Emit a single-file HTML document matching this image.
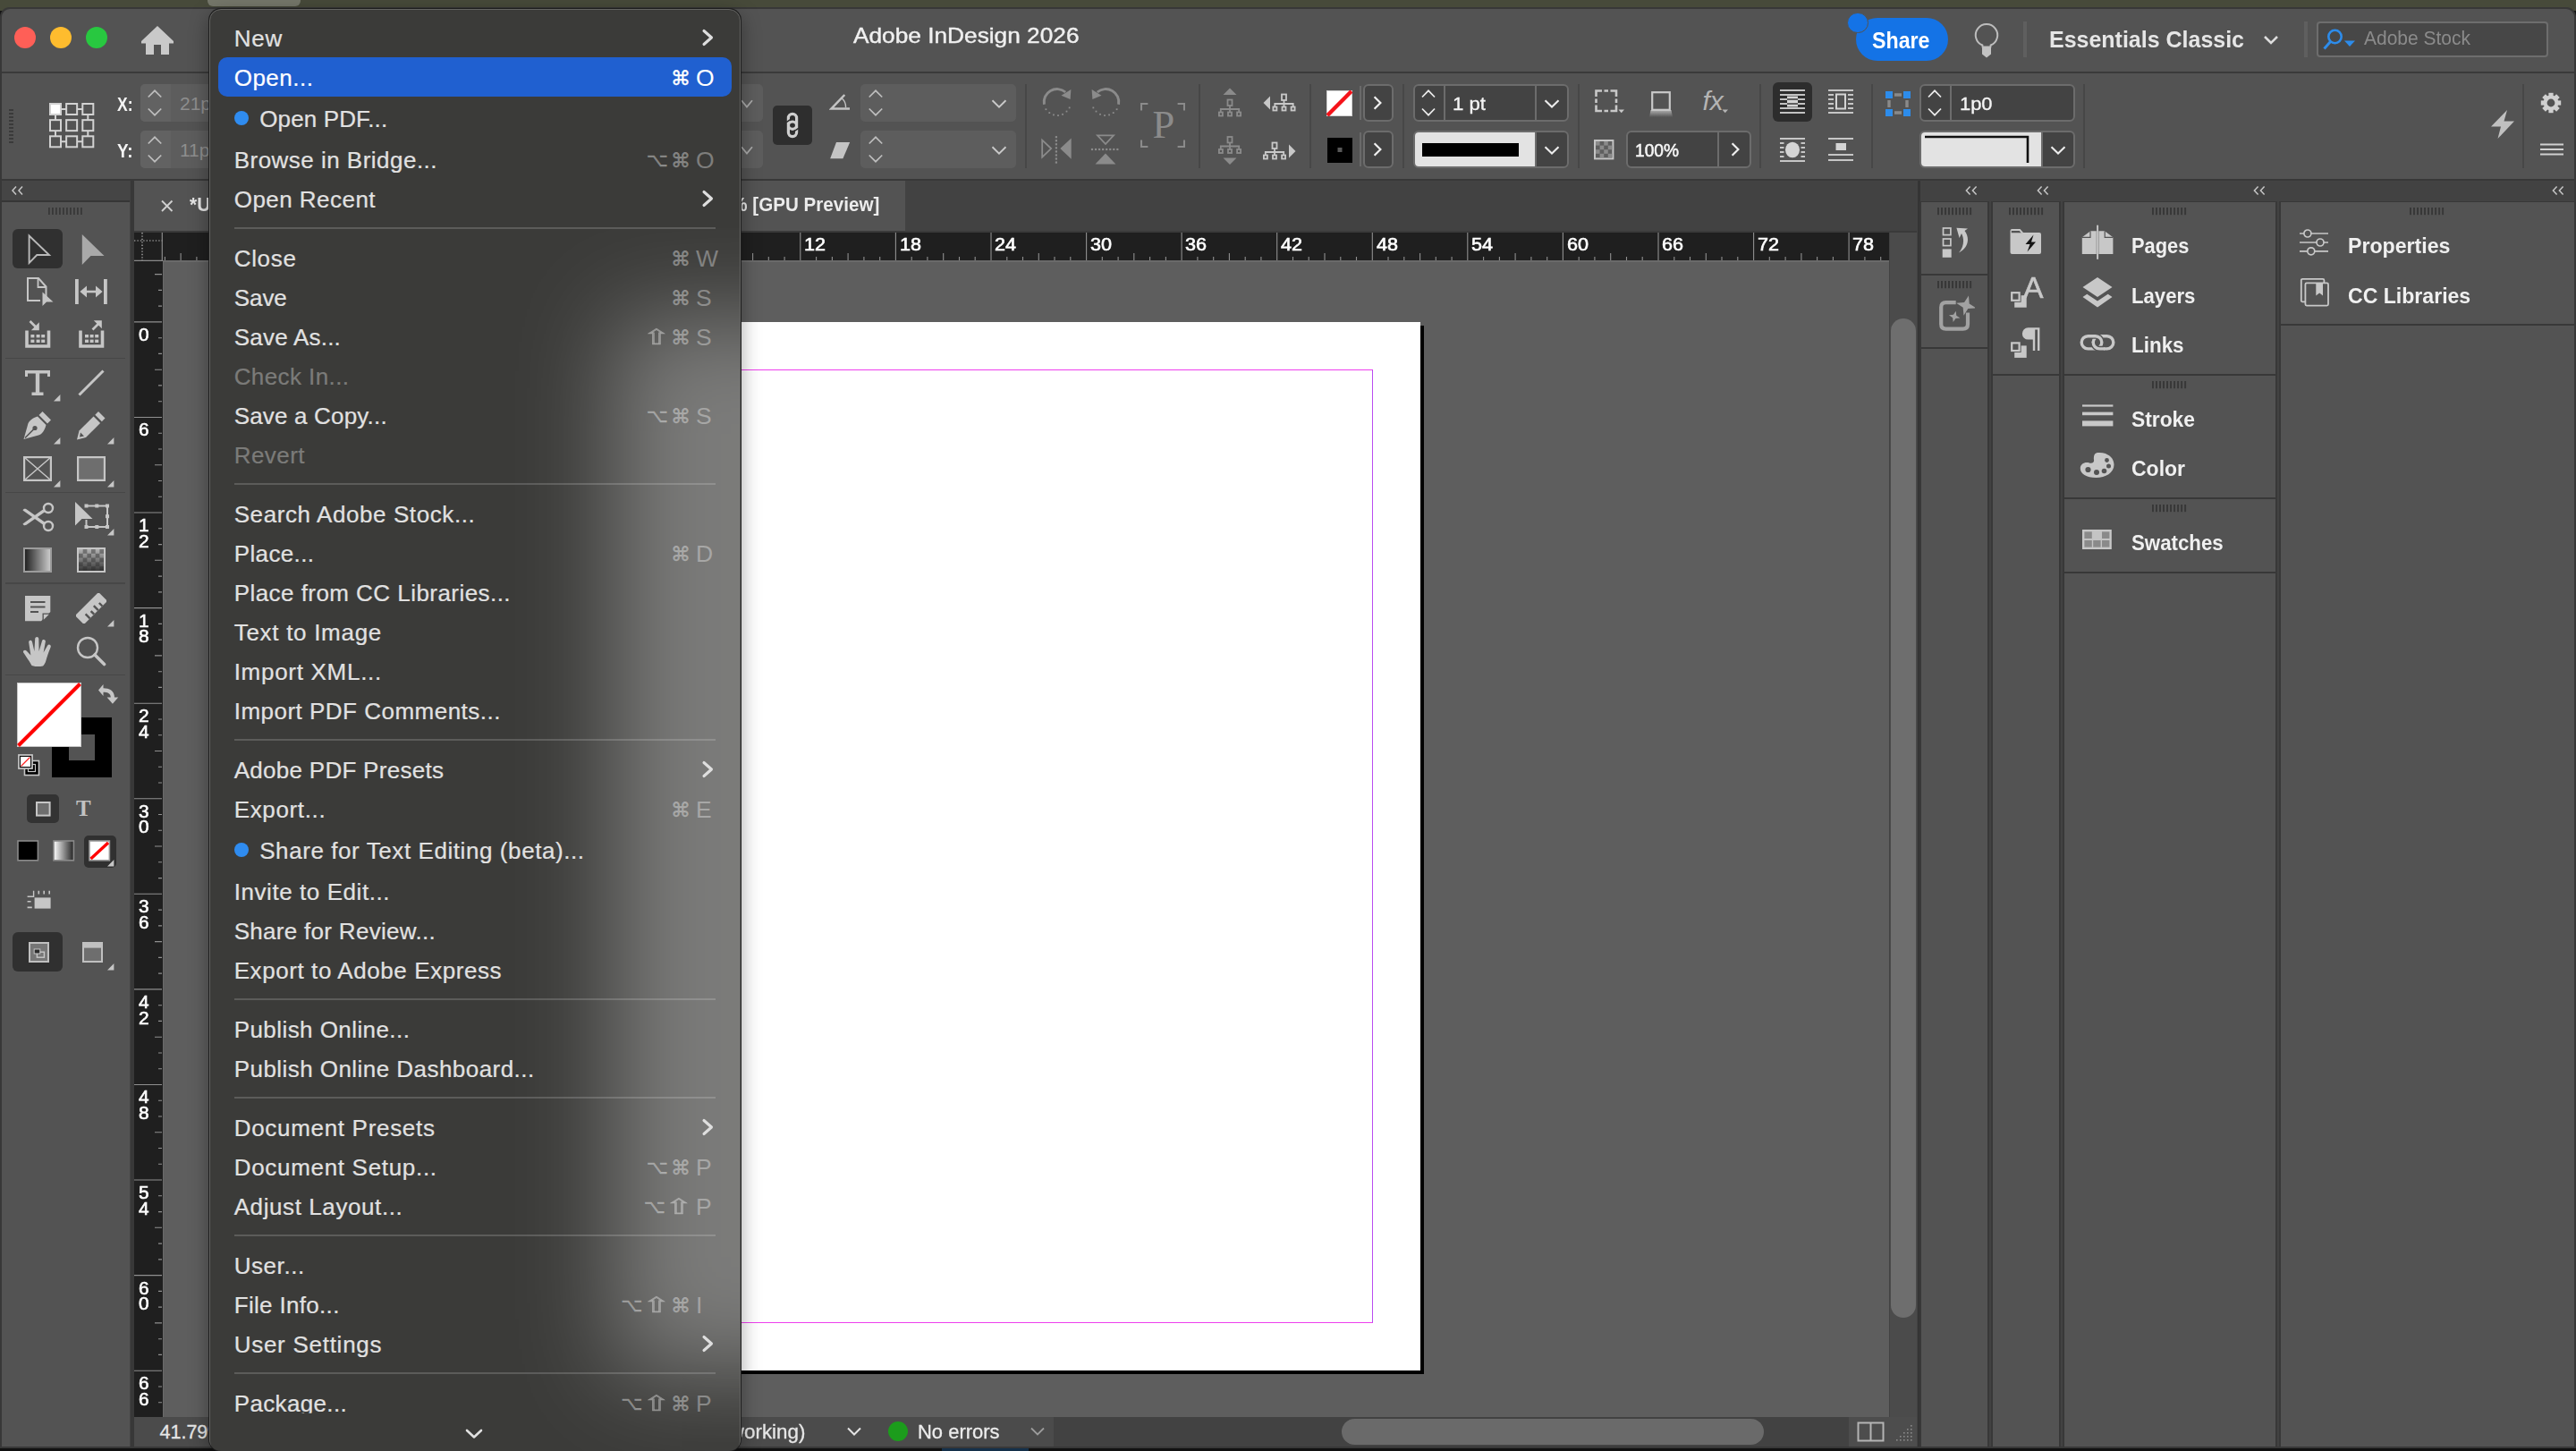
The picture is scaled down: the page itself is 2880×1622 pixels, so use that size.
<!DOCTYPE html>
<html lang="en"><head><meta charset="utf-8"><title>Adobe InDesign 2026</title>
<style>
html,body{margin:0;padding:0;}
body{width:2880px;height:1622px;position:relative;overflow:hidden;background:#151515;font-family:"Liberation Sans",sans-serif;}
div,svg{position:absolute;box-sizing:border-box;}
.t{white-space:pre;}
</style></head><body>
<div style="left:0px;top:0px;width:2880px;height:12px;background:#474a3a;"></div>
<div style="left:232.4px;top:0px;width:103.5px;height:7.4px;background:#75776a;border-radius:0 0 6px 6px;"></div>
<div style="left:0px;top:1610px;width:2880px;height:12px;background:#111111;"></div>
<div style="left:1053px;top:1617px;width:97px;height:5px;background:#14304a;"></div>
<div style="left:2px;top:10px;width:2876px;height:1607px;background:#535353;border-radius:9px 9px 0 0;box-shadow:0 0 0 2px #383838;"></div>
<div style="left:2px;top:80px;width:2876px;height:2px;background:#3a3a3a;"></div>
<div style="left:2px;top:200px;width:2876px;height:2px;background:#383838;"></div>
<div style="left:2px;top:202px;width:2876px;height:1415px;background:#424242;"></div>
<div style="left:15.8px;top:29.5px;width:24.6px;height:24.6px;background:#ff5f57;border-radius:50%;"></div>
<div style="left:55.89999999999999px;top:29.5px;width:24.6px;height:24.6px;background:#febc2e;border-radius:50%;"></div>
<div style="left:95.89999999999999px;top:29.5px;width:24.6px;height:24.6px;background:#28c840;border-radius:50%;"></div>
<svg style="left:156px;top:27px;" width="40" height="36" viewBox="0 0 40 36"><path d="M20 2 L2 19 L2 21.5 L7 21.5 L7 34 L16 34 L16 23 L24 23 L24 34 L33 34 L33 21.5 L38 21.5 L38 19 Z" fill="#c9c9c9"/></svg>
<div class="t" style="left:953.5px;top:24.18px;height:31px;line-height:31px;font-size:24px;color:#f0f0f0;transform:scaleX(1.0938);transform-origin:left center;-webkit-text-stroke:.4px #f0f0f0;">Adobe InDesign 2026</div>
<div style="left:2075px;top:20px;width:103px;height:48px;background:#1473e6;border-radius:24px;"></div>
<div style="left:2065.4px;top:13.7px;width:23.6px;height:23.6px;background:#1473e6;border-radius:50%;border:1.8px solid #535353;"></div>
<div class="t" style="left:2093px;top:27.80px;height:34px;line-height:34px;font-size:26px;color:#ffffff;font-weight:bold;transform:scaleX(0.8926);transform-origin:left center;">Share</div>
<svg style="left:2204px;top:24px;" width="34" height="42" viewBox="0 0 34 42"><path d="M12.4 26.5 A12.2 12.2 0 1 1 21.6 26.5 L21.4 28.6 H12.6 Z" fill="none" stroke="#bdbdbd" stroke-width="2" stroke-linejoin="round"/><path d="M12 28.4 H22 V36.6 L17 40.4 L12 36.6 Z" fill="#c2c2c2"/></svg>
<div style="left:2262px;top:24px;width:3.8px;height:40px;background:#5f5f5f;"></div>
<div class="t" style="left:2291px;top:26.80px;height:34px;line-height:34px;font-size:26px;color:#e6e6e6;font-weight:bold;transform:scaleX(0.9607);transform-origin:left center;">Essentials Classic</div>
<svg style="left:2529px;top:38px;" width="20" height="14" viewBox="0 0 20 14"><path d="M3 3 L10 10 L17 3" fill="none" stroke="#dddddd" stroke-width="2.6"/></svg>
<div style="left:2576px;top:24px;width:3.8px;height:40px;background:#5f5f5f;"></div>
<div style="left:2590px;top:24px;width:259px;height:40px;background:#474747;border:2px solid #6d6d6d;border-radius:4px;box-sizing:border-box;"></div>
<svg style="left:2596px;top:30px;" width="40" height="28" viewBox="0 0 40 28"><circle cx="14.5" cy="11" r="7.2" fill="none" stroke="#2d8ceb" stroke-width="2.6"/><path d="M9.5 16.5 L2.5 24.5" stroke="#2d8ceb" stroke-width="3" fill="none"/><path d="M25 15.5 H37 L31 22 Z" fill="#2d8ceb"/></svg>
<div class="t" style="left:2643px;top:28.26px;height:29px;line-height:29px;font-size:22.5px;color:#8b8b8b;transform:scaleX(0.9327);transform-origin:left center;">Adobe Stock</div>
<svg style="left:10px;top:122px;" width="6" height="40" viewBox="0 0 6 40"><rect x="0" y="0" width="5" height="2" fill="#3a3a3a"/><rect x="0" y="4" width="5" height="2" fill="#3a3a3a"/><rect x="0" y="8" width="5" height="2" fill="#3a3a3a"/><rect x="0" y="12" width="5" height="2" fill="#3a3a3a"/><rect x="0" y="16" width="5" height="2" fill="#3a3a3a"/><rect x="0" y="20" width="5" height="2" fill="#3a3a3a"/><rect x="0" y="24" width="5" height="2" fill="#3a3a3a"/><rect x="0" y="28" width="5" height="2" fill="#3a3a3a"/><rect x="0" y="32" width="5" height="2" fill="#3a3a3a"/><rect x="0" y="36" width="5" height="2" fill="#3a3a3a"/></svg>
<svg style="left:55px;top:115px;" width="51" height="51" viewBox="0 0 51 51"><g fill="none" stroke="#d2d2d2" stroke-width="2"><rect x="1.0" y="1.0" width="12" height="12" fill="#ffffff"/><rect x="1.0" y="19.15" width="12" height="12"/><rect x="1.0" y="37.3" width="12" height="12"/><rect x="19.15" y="1.0" width="12" height="12"/><rect x="19.15" y="19.15" width="12" height="12"/><rect x="19.15" y="37.3" width="12" height="12"/><rect x="37.3" y="1.0" width="12" height="12"/><rect x="37.3" y="19.15" width="12" height="12"/><rect x="37.3" y="37.3" width="12" height="12"/><path d="M13 7 H19.2 M31.2 7 H37.3 M13 43.3 H19.2 M31.2 43.3 H37.3 M7 13 V19.2 M7 31.2 V37.3 M43.3 13 V19.2 M43.3 31.2 V37.3"/></g></svg>
<div class="t" style="left:131px;top:102.45px;height:29px;line-height:29px;font-size:22px;color:#f4f4f4;font-weight:bold;transform:scaleX(0.7954);transform-origin:left center;">X:</div>
<div class="t" style="left:131px;top:154.45px;height:29px;line-height:29px;font-size:22px;color:#f4f4f4;font-weight:bold;transform:scaleX(0.8592);transform-origin:left center;">Y:</div>
<div style="left:156.5px;top:94px;width:696px;height:42px;background:#5d5d5d;border-radius:5px;"></div>
<div style="left:156.5px;top:94px;width:34px;height:42px;background:#626262;border-radius:5px 0 0 5px;"></div>
<svg style="left:163px;top:94px;" width="20" height="42" viewBox="0 0 20 42"><path d="M2.75 14.5 L10 7.3 L17.25 14.5 M2.75 27.5 L10 34.7 L17.25 27.5" fill="none" stroke="#bdbdbd" stroke-width="1.7"/></svg>
<div style="left:156.5px;top:146px;width:696px;height:42px;background:#5d5d5d;border-radius:5px;"></div>
<div style="left:156.5px;top:146px;width:34px;height:42px;background:#626262;border-radius:5px 0 0 5px;"></div>
<svg style="left:163px;top:146px;" width="20" height="42" viewBox="0 0 20 42"><path d="M2.75 14.5 L10 7.3 L17.25 14.5 M2.75 27.5 L10 34.7 L17.25 27.5" fill="none" stroke="#bdbdbd" stroke-width="1.7"/></svg>
<div class="t" style="left:201px;top:102.24px;height:27px;line-height:27px;font-size:21px;color:#8e8e8e;">21p0</div>
<div class="t" style="left:201px;top:154.24px;height:27px;line-height:27px;font-size:21px;color:#8e8e8e;">11p0</div>
<svg style="left:825px;top:109.5px;" width="20" height="12" viewBox="0 0 20 12"><path d="M4.0 2.2 L10 9.6 L16.0 2.2" fill="none" stroke="#aaaaaa" stroke-width="1.8"/></svg>
<svg style="left:825px;top:161.5px;" width="20" height="12" viewBox="0 0 20 12"><path d="M4.0 2.2 L10 9.6 L16.0 2.2" fill="none" stroke="#aaaaaa" stroke-width="1.8"/></svg>
<div style="left:864px;top:118px;width:44px;height:44px;background:#2e2e2e;border-radius:5px;"></div>
<svg style="left:876px;top:124px;" width="20" height="32" viewBox="0 0 20 32"><g fill="none" stroke="#cfcfcf" stroke-width="3.2"><rect x="5.4" y="3.3" width="9.2" height="17" rx="4.6"/><rect x="5.4" y="12" width="9.2" height="16.7" rx="4.6"/></g><path d="M3.2 12.6 L7.6 9.6 M12.4 22.4 L16.8 19.4" stroke="#2e2e2e" stroke-width="1.5"/></svg>
<svg style="left:927px;top:104px;" width="25" height="21" viewBox="0 0 25 21"><path d="M17.3 2 L2.6 17.4 H23" fill="none" stroke="#c4c4c4" stroke-width="2.5"/><path d="M14.3 6 A13 13 0 0 1 18.6 16.2" fill="none" stroke="#c4c4c4" stroke-width="1.4"/></svg>
<svg style="left:927px;top:158px;" width="25" height="20" viewBox="0 0 25 20"><path d="M8 0.9 H23.2 L15.4 19.2 H1.2 Z" fill="#c4c4c4"/></svg>
<div style="left:962px;top:94px;width:174px;height:42px;background:#5d5d5d;border-radius:5px;"></div>
<svg style="left:969px;top:94px;" width="20" height="42" viewBox="0 0 20 42"><path d="M2.75 14.5 L10 7.3 L17.25 14.5 M2.75 27.5 L10 34.7 L17.25 27.5" fill="none" stroke="#bdbdbd" stroke-width="1.7"/></svg>
<svg style="left:1107px;top:109.5px;" width="20" height="12" viewBox="0 0 20 12"><path d="M2.5 2.2 L10 9.6 L17.5 2.2" fill="none" stroke="#c9c9c9" stroke-width="1.9"/></svg>
<div style="left:962px;top:146px;width:174px;height:42px;background:#5d5d5d;border-radius:5px;"></div>
<svg style="left:969px;top:146px;" width="20" height="42" viewBox="0 0 20 42"><path d="M2.75 14.5 L10 7.3 L17.25 14.5 M2.75 27.5 L10 34.7 L17.25 27.5" fill="none" stroke="#bdbdbd" stroke-width="1.7"/></svg>
<svg style="left:1107px;top:161.5px;" width="20" height="12" viewBox="0 0 20 12"><path d="M2.5 2.2 L10 9.6 L17.5 2.2" fill="none" stroke="#c9c9c9" stroke-width="1.9"/></svg>
<div style="left:1145.5px;top:94px;width:2px;height:94px;background:#474747;"></div>
<svg style="left:1165px;top:96px;" width="34" height="36" viewBox="0 0 34 36"><path d="M2.4 20.7 A14.6 14.6 0 0 1 26.2 7" fill="none" stroke="#8b8b8b" stroke-width="2.9"/><path d="M21.5 10.7 L32.4 4.1 L31.6 15 Z" fill="#8b8b8b"/><rect x="3.50" y="25.30" width="1.8" height="1.8" fill="#8b8b8b"/><rect x="7.40" y="29.20" width="1.8" height="1.8" fill="#8b8b8b"/><rect x="12.05" y="31.50" width="1.8" height="1.8" fill="#8b8b8b"/><rect x="17.10" y="32.15" width="1.8" height="1.8" fill="#8b8b8b"/><rect x="22.10" y="30.90" width="1.8" height="1.8" fill="#8b8b8b"/><rect x="26.60" y="27.65" width="1.8" height="1.8" fill="#8b8b8b"/><rect x="29.75" y="23.50" width="1.8" height="1.8" fill="#8b8b8b"/></svg>
<svg style="left:1219.3px;top:96px;" width="34" height="36" viewBox="0 0 34 36"><g transform="translate(34,0) scale(-1,1)"><path d="M2.4 20.7 A14.6 14.6 0 0 1 26.2 7" fill="none" stroke="#8b8b8b" stroke-width="2.9"/><path d="M21.5 10.7 L32.4 4.1 L31.6 15 Z" fill="#8b8b8b"/><rect x="3.50" y="25.30" width="1.8" height="1.8" fill="#8b8b8b"/><rect x="7.40" y="29.20" width="1.8" height="1.8" fill="#8b8b8b"/><rect x="12.05" y="31.50" width="1.8" height="1.8" fill="#8b8b8b"/><rect x="17.10" y="32.15" width="1.8" height="1.8" fill="#8b8b8b"/><rect x="22.10" y="30.90" width="1.8" height="1.8" fill="#8b8b8b"/><rect x="26.60" y="27.65" width="1.8" height="1.8" fill="#8b8b8b"/><rect x="29.75" y="23.50" width="1.8" height="1.8" fill="#8b8b8b"/></g></svg>
<svg style="left:1163px;top:151px;" width="36" height="32" viewBox="0 0 36 32"><path d="M2.2 5.6 L12.2 15.1 L2.2 24.6 Z" fill="none" stroke="#8b8b8b" stroke-width="1.8"/><path d="M34.7 3.4 L22.3 15.1 L34.7 26.7 Z" fill="#8b8b8b"/><rect x="16.80" y="1.10" width="2.2" height="2.2" fill="#8b8b8b"/><rect x="16.80" y="5.15" width="2.2" height="2.2" fill="#8b8b8b"/><rect x="16.80" y="9.20" width="2.2" height="2.2" fill="#8b8b8b"/><rect x="16.80" y="13.25" width="2.2" height="2.2" fill="#8b8b8b"/><rect x="16.80" y="17.30" width="2.2" height="2.2" fill="#8b8b8b"/><rect x="16.80" y="21.35" width="2.2" height="2.2" fill="#8b8b8b"/><rect x="16.80" y="25.40" width="2.2" height="2.2" fill="#8b8b8b"/><rect x="16.80" y="29.45" width="2.2" height="2.2" fill="#8b8b8b"/></svg>
<svg style="left:1219px;top:149px;" width="32" height="36" viewBox="0 0 32 36"><path d="M8 2.4 L26 2.4 L17 12 Z" fill="none" stroke="#8b8b8b" stroke-width="1.8"/><path d="M5.5 34.6 L28.4 34.6 L16.95 22.5 Z" fill="#8b8b8b"/><rect x="0.90" y="16.90" width="2.2" height="2.2" fill="#8b8b8b"/><rect x="4.95" y="16.90" width="2.2" height="2.2" fill="#8b8b8b"/><rect x="9.00" y="16.90" width="2.2" height="2.2" fill="#8b8b8b"/><rect x="13.05" y="16.90" width="2.2" height="2.2" fill="#8b8b8b"/><rect x="17.10" y="16.90" width="2.2" height="2.2" fill="#8b8b8b"/><rect x="21.15" y="16.90" width="2.2" height="2.2" fill="#8b8b8b"/><rect x="25.20" y="16.90" width="2.2" height="2.2" fill="#8b8b8b"/><rect x="29.25" y="16.90" width="2.2" height="2.2" fill="#8b8b8b"/></svg>
<svg style="left:1275px;top:115px;" width="50" height="50" viewBox="0 0 50 50"><path d="M1 8.4 V1 H8.4 M41.6 1 H49 V8.4 M49 41.6 V49 H41.6 M8.4 49 H1 V41.6" fill="none" stroke="#8b8b8b" stroke-width="2.1"/></svg>
<div class="t" style="left:1288.6px;top:109.91px;height:58px;line-height:58px;font-size:44.5px;color:#8b8b8b;font-family:'Liberation Serif',serif;">P</div>
<div style="left:1339.5px;top:94px;width:2px;height:94px;background:#474747;"></div>
<svg style="left:1362px;top:98px;" width="26" height="33" viewBox="0 0 26 33"><path d="M5.5 8 L13 0.5 L20.5 8 Z" fill="#8b8b8b"/><g transform="translate(0,12.5)"><g fill="none" stroke="#8b8b8b" stroke-width="1.8"><rect x="10.5" y="1" width="5" height="6.5"/><path d="M13 7.5 V11.5 M2.8 15 V11.5 H23.2 V15 M13 11.5 V15"/><rect x="0.9" y="15" width="4" height="4"/><rect x="11" y="15" width="4" height="4"/><rect x="21.1" y="15" width="4" height="4"/></g></g></svg>
<svg style="left:1362px;top:152px;" width="26" height="33" viewBox="0 0 26 33"><g><g fill="none" stroke="#8b8b8b" stroke-width="1.8"><rect x="10.5" y="1" width="5" height="6.5"/><path d="M13 7.5 V11.5 M2.8 15 V11.5 H23.2 V15 M13 11.5 V15"/><rect x="0.9" y="15" width="4" height="4"/><rect x="11" y="15" width="4" height="4"/><rect x="21.1" y="15" width="4" height="4"/></g></g><path d="M5.5 24.5 L13 32 L20.5 24.5 Z" fill="#8b8b8b"/></svg>
<svg style="left:1412px;top:104px;" width="37" height="21" viewBox="0 0 37 21"><path d="M8 3.5 L0.5 11 L8 18.5 Z" fill="#c8c8c8"/><g transform="translate(10.5,0.5)"><g fill="none" stroke="#c8c8c8" stroke-width="1.8"><rect x="10.5" y="1" width="5" height="6.5"/><path d="M13 7.5 V11.5 M2.8 15 V11.5 H23.2 V15 M13 11.5 V15"/><rect x="0.9" y="15" width="4" height="4"/><rect x="11" y="15" width="4" height="4"/><rect x="21.1" y="15" width="4" height="4"/></g></g></svg>
<svg style="left:1412px;top:158px;" width="37" height="21" viewBox="0 0 37 21"><g transform="translate(0,0.5)"><g fill="none" stroke="#c8c8c8" stroke-width="1.8"><rect x="10.5" y="1" width="5" height="6.5"/><path d="M13 7.5 V11.5 M2.8 15 V11.5 H23.2 V15 M13 11.5 V15"/><rect x="0.9" y="15" width="4" height="4"/><rect x="11" y="15" width="4" height="4"/><rect x="21.1" y="15" width="4" height="4"/></g></g><path d="M29 3.5 L36.5 11 L29 18.5 Z" fill="#c8c8c8"/></svg>
<div style="left:1463.5px;top:94px;width:2px;height:94px;background:#474747;"></div>
<svg style="left:1482.5px;top:100.5px;" width="29" height="29" viewBox="0 0 29 29"><rect x="0.5" y="0.5" width="28" height="28" fill="#ffffff" stroke="#d0d0d0" stroke-width="1"/><path d="M1 28 L28 1" stroke="#f4131a" stroke-width="4.4"/></svg>
<svg style="left:1484px;top:154px;" width="28" height="28" viewBox="0 0 28 28"><rect x="0" y="0" width="28" height="28" fill="#000000"/><rect x="11.5" y="11" width="5" height="5" fill="#585858"/></svg>
<div style="left:1520px;top:96px;width:1.5px;height:38px;background:#6a6a6a;"></div>
<div style="left:1524px;top:94px;width:34px;height:42px;background:#434343;border:2px solid #6c6c6c;border-radius:6px;"></div>
<svg style="left:1533.5px;top:105px;" width="12" height="20" viewBox="0 0 12 20"><path d="M2.6 3.2 L9.4 10 L2.6 16.8" fill="none" stroke="#f0f0f0" stroke-width="2.2"/></svg>
<div style="left:1520px;top:148px;width:1.5px;height:38px;background:#6a6a6a;"></div>
<div style="left:1524px;top:146px;width:34px;height:42px;background:#434343;border:2px solid #6c6c6c;border-radius:6px;"></div>
<svg style="left:1533.5px;top:157px;" width="12" height="20" viewBox="0 0 12 20"><path d="M2.6 3.2 L9.4 10 L2.6 16.8" fill="none" stroke="#f0f0f0" stroke-width="2.2"/></svg>
<div style="left:1567.7px;top:94px;width:2px;height:94px;background:#474747;"></div>
<div style="left:1580px;top:94px;width:174px;height:42px;background:#434343;border:2px solid #6c6c6c;border-radius:6px;"></div>
<div style="left:1614px;top:96px;width:2px;height:38px;background:#6c6c6c;"></div>
<div style="left:1716px;top:96px;width:2px;height:38px;background:#6c6c6c;"></div>
<svg style="left:1587px;top:94px;" width="20" height="42" viewBox="0 0 20 42"><path d="M3.0 14.5 L10 7.3 L17.0 14.5 M3.0 27.5 L10 34.7 L17.0 27.5" fill="none" stroke="#ececec" stroke-width="1.7"/></svg>
<div class="t" style="left:1623.5px;top:102.24px;height:27px;line-height:27px;font-size:21px;color:#f4f4f4;transform:scaleX(1.0563);transform-origin:left center;-webkit-text-stroke:.35px #f4f4f4;">1 pt</div>
<svg style="left:1725px;top:109.5px;" width="20" height="12" viewBox="0 0 20 12"><path d="M2.5 2.2 L10 9.6 L17.5 2.2" fill="none" stroke="#ececec" stroke-width="2.1"/></svg>
<div style="left:1580px;top:146px;width:174px;height:42px;background:#434343;border:2px solid #6c6c6c;border-radius:6px;"></div>
<div style="left:1582px;top:148px;width:134px;height:38px;background:#e3e3e3;border-radius:4px 0 0 4px;"></div>
<div style="left:1590px;top:160px;width:108px;height:15px;background:#000000;"></div>
<div style="left:1716px;top:148px;width:2px;height:38px;background:#6c6c6c;"></div>
<svg style="left:1725px;top:161.5px;" width="20" height="12" viewBox="0 0 20 12"><path d="M2.5 2.2 L10 9.6 L17.5 2.2" fill="none" stroke="#ececec" stroke-width="2.1"/></svg>
<div style="left:1763.7px;top:94px;width:2px;height:94px;background:#474747;"></div>
<svg style="left:1783px;top:99.5px;" width="34" height="27" viewBox="0 0 34 27"><path d="M1.5 8 V1.5 H8 M17.5 1.5 H24 V8 M24 17.5 V24 H17.5 M8 24 H1.5 V17.5 M10.5 1.5 H15 M10.5 24 H15 M1.5 10.5 V15 M24 10.5 V15" fill="none" stroke="#c8c8c8" stroke-width="2.6"/><path d="M26.5 22.5 H33 L29.7 26.3 Z" fill="#c8c8c8"/></svg>
<svg style="left:1840px;top:100px;" width="34" height="32" viewBox="0 0 34 32"><defs><linearGradient id="dsg" x1="0" y1="0" x2="0" y2="1"><stop offset="0" stop-color="#d0d0d0" stop-opacity=".75"/><stop offset="1" stop-color="#d0d0d0" stop-opacity="0"/></linearGradient></defs><path d="M5.5 23 H28.5 L30 31 H4 Z" fill="url(#dsg)"/><rect x="7.2" y="3.2" width="19.6" height="19.6" fill="none" stroke="#c8c8c8" stroke-width="2.2"/></svg>
<div class="t" style="left:1903.5px;top:92.84px;height:39px;line-height:39px;font-size:30px;color:#b4b4b4;font-style:italic;">fx</div>
<svg style="left:1925px;top:122px;" width="8" height="5" viewBox="0 0 8 5"><path d="M0.5 0.5 H7 L3.7 4.3 Z" fill="#b4b4b4"/></svg>
<svg style="left:1782px;top:156px;" width="23" height="23" viewBox="0 0 23 23"><rect x="1" y="1" width="20.4" height="20.4" fill="#5e5e5e" stroke="#c4c4c4" stroke-width="2"/><rect x="2.0" y="2.0" width="4.6" height="4.6" fill="#8a8a8a"/><rect x="2.0" y="11.2" width="4.6" height="4.6" fill="#8a8a8a"/><rect x="6.6" y="6.6" width="4.6" height="4.6" fill="#8a8a8a"/><rect x="6.6" y="15.799999999999999" width="4.6" height="4.6" fill="#8a8a8a"/><rect x="11.2" y="2.0" width="4.6" height="4.6" fill="#8a8a8a"/><rect x="11.2" y="11.2" width="4.6" height="4.6" fill="#8a8a8a"/><rect x="15.799999999999999" y="6.6" width="4.6" height="4.6" fill="#8a8a8a"/><rect x="15.799999999999999" y="15.799999999999999" width="4.6" height="4.6" fill="#8a8a8a"/></svg>
<div style="left:1818px;top:146px;width:140px;height:42px;background:#434343;border:2px solid #6c6c6c;border-radius:6px;"></div>
<div style="left:1920px;top:148px;width:2px;height:38px;background:#6c6c6c;"></div>
<div class="t" style="left:1828px;top:154.04px;height:27px;line-height:27px;font-size:21px;color:#f6f6f6;transform:scaleX(0.9123);transform-origin:left center;-webkit-text-stroke:.55px #f6f6f6;">100%</div>
<svg style="left:1933.5px;top:157px;" width="12" height="20" viewBox="0 0 12 20"><path d="M2.6 3.2 L9.4 10 L2.6 16.8" fill="none" stroke="#f0f0f0" stroke-width="2.2"/></svg>
<div style="left:1967.3px;top:94px;width:2px;height:94px;background:#474747;"></div>
<div style="left:1982px;top:92px;width:44px;height:44px;background:#2d2d2d;border-radius:6px;"></div>
<svg style="left:1990px;top:100px;" width="28" height="27" viewBox="0 0 28 27"><path d="M0 1 H28" stroke="#d4d4d4" stroke-width="1.8"/><path d="M0 6 H28" stroke="#d4d4d4" stroke-width="1.8"/><path d="M0 11 H28" stroke="#d4d4d4" stroke-width="1.8"/><path d="M0 16 H28" stroke="#d4d4d4" stroke-width="1.8"/><path d="M0 21 H28" stroke="#d4d4d4" stroke-width="1.8"/><path d="M0 26 H28" stroke="#d4d4d4" stroke-width="1.8"/><rect x="8" y="7.5" width="12" height="12" fill="#d4d4d4"/><path d="M8 11 H20" stroke="#2d2d2d" stroke-width="1.4"/><path d="M8 16 H20" stroke="#2d2d2d" stroke-width="1.4"/></svg>
<svg style="left:2044px;top:100px;" width="28" height="27" viewBox="0 0 28 27"><path d="M0 1 H28" stroke="#d4d4d4" stroke-width="1.8"/><path d="M0 26 H28" stroke="#d4d4d4" stroke-width="1.8"/><path d="M0 6 H6" stroke="#d4d4d4" stroke-width="1.8"/><path d="M0 11 H6" stroke="#d4d4d4" stroke-width="1.8"/><path d="M0 16 H6" stroke="#d4d4d4" stroke-width="1.8"/><path d="M0 21 H6" stroke="#d4d4d4" stroke-width="1.8"/><path d="M22 6 H28" stroke="#d4d4d4" stroke-width="1.8"/><path d="M22 11 H28" stroke="#d4d4d4" stroke-width="1.8"/><path d="M22 16 H28" stroke="#d4d4d4" stroke-width="1.8"/><path d="M22 21 H28" stroke="#d4d4d4" stroke-width="1.8"/><rect x="9" y="5.5" width="10" height="16" fill="none" stroke="#d4d4d4" stroke-width="2"/></svg>
<svg style="left:1990px;top:154px;" width="28" height="27" viewBox="0 0 28 27"><path d="M0 1 H28" stroke="#d4d4d4" stroke-width="1.8"/><path d="M0 26 H28" stroke="#d4d4d4" stroke-width="1.8"/><path d="M0 6 H4.5" stroke="#d4d4d4" stroke-width="1.8"/><path d="M0 11 H4.5" stroke="#d4d4d4" stroke-width="1.8"/><path d="M0 16 H4.5" stroke="#d4d4d4" stroke-width="1.8"/><path d="M0 21 H4.5" stroke="#d4d4d4" stroke-width="1.8"/><path d="M23.5 6 H28" stroke="#d4d4d4" stroke-width="1.8"/><path d="M23.5 11 H28" stroke="#d4d4d4" stroke-width="1.8"/><path d="M23.5 16 H28" stroke="#d4d4d4" stroke-width="1.8"/><path d="M23.5 21 H28" stroke="#d4d4d4" stroke-width="1.8"/><ellipse cx="14" cy="13.5" rx="8" ry="8.8" fill="#d4d4d4"/></svg>
<svg style="left:2044px;top:154px;" width="28" height="27" viewBox="0 0 28 27"><path d="M0 1 H28" stroke="#d4d4d4" stroke-width="1.8"/><path d="M0 19 H28" stroke="#d4d4d4" stroke-width="1.8"/><path d="M0 25 H28" stroke="#d4d4d4" stroke-width="1.8"/><rect x="8.5" y="6" width="11.5" height="8" fill="#d4d4d4"/></svg>
<div style="left:2091.8px;top:94px;width:2px;height:94px;background:#474747;"></div>
<svg style="left:2108px;top:102px;" width="28" height="28" viewBox="0 0 28 28"><rect x="0" y="0" width="8" height="8" fill="#2d8ceb"/><rect x="20" y="0" width="8" height="8" fill="#2d8ceb"/><rect x="0" y="20" width="8" height="8" fill="#2d8ceb"/><rect x="20" y="20" width="8" height="8" fill="#2d8ceb"/><path d="M10 4 H18 M10 24 H18 M4 10 V18 M24 10 V18" stroke="#8a8a8a" stroke-width="3.4"/></svg>
<div style="left:2146px;top:94px;width:174px;height:42px;background:#434343;border:2px solid #6c6c6c;border-radius:6px;"></div>
<div style="left:2180px;top:96px;width:2px;height:38px;background:#6c6c6c;"></div>
<svg style="left:2153px;top:94px;" width="20" height="42" viewBox="0 0 20 42"><path d="M3.0 14.5 L10 7.3 L17.0 14.5 M3.0 27.5 L10 34.7 L17.0 27.5" fill="none" stroke="#ececec" stroke-width="1.7"/></svg>
<div class="t" style="left:2191px;top:102.24px;height:27px;line-height:27px;font-size:21px;color:#f4f4f4;transform:scaleX(1.0417);transform-origin:left center;-webkit-text-stroke:.35px #f4f4f4;">1p0</div>
<div style="left:2146px;top:146px;width:174px;height:42px;background:#434343;border:2px solid #6c6c6c;border-radius:6px;"></div>
<div style="left:2148px;top:148px;width:134px;height:38px;background:#e3e3e3;border-radius:4px 0 0 4px;"></div>
<svg style="left:2148px;top:148px;" width="134" height="38" viewBox="0 0 134 38"><path d="M4 5 H119 V34" fill="none" stroke="#111" stroke-width="2.6"/></svg>
<div style="left:2282px;top:148px;width:2px;height:38px;background:#6c6c6c;"></div>
<svg style="left:2290.5px;top:161.5px;" width="20" height="12" viewBox="0 0 20 12"><path d="M2.5 2.2 L10 9.6 L17.5 2.2" fill="none" stroke="#ececec" stroke-width="2.1"/></svg>
<div style="left:2329px;top:94px;width:2px;height:94px;background:#474747;"></div>
<div style="left:2820px;top:94px;width:2px;height:94px;background:#474747;"></div>
<svg style="left:2782px;top:122px;" width="32" height="34" viewBox="0 0 32 34"><path d="M21 1 L3 19.5 H14 L10.5 33 L29 13.5 H17.5 Z" fill="#c0c0c0"/></svg>
<svg style="left:2840px;top:103px;" width="24" height="24" viewBox="0 0 24 24"><g transform="translate(12,12)"><rect x="-2.6" y="-11.2" width="5.2" height="6" fill="#d0d0d0" transform="rotate(0)"/><rect x="-2.6" y="-11.2" width="5.2" height="6" fill="#d0d0d0" transform="rotate(45)"/><rect x="-2.6" y="-11.2" width="5.2" height="6" fill="#d0d0d0" transform="rotate(90)"/><rect x="-2.6" y="-11.2" width="5.2" height="6" fill="#d0d0d0" transform="rotate(135)"/><rect x="-2.6" y="-11.2" width="5.2" height="6" fill="#d0d0d0" transform="rotate(180)"/><rect x="-2.6" y="-11.2" width="5.2" height="6" fill="#d0d0d0" transform="rotate(225)"/><rect x="-2.6" y="-11.2" width="5.2" height="6" fill="#d0d0d0" transform="rotate(270)"/><rect x="-2.6" y="-11.2" width="5.2" height="6" fill="#d0d0d0" transform="rotate(315)"/><circle r="6.4" fill="none" stroke="#d0d0d0" stroke-width="4"/></g></svg>
<svg style="left:2840px;top:160px;" width="26" height="14" viewBox="0 0 26 14"><path d="M0 1.5 H26 M0 7 H26 M0 12.5 H26" stroke="#d0d0d0" stroke-width="1.9"/></svg>
<div style="left:150px;top:202px;width:862px;height:56px;background:#535353;"></div>
<div style="left:146px;top:202px;width:4px;height:1415px;background:#383838;"></div>
<svg style="left:178px;top:222px;" width="18" height="18" viewBox="0 0 18 18"><path d="M3 2.5 L14.5 14 M14.5 2.5 L3 14" stroke="#d0d0d0" stroke-width="1.9" fill="none"/></svg>
<div class="t" style="left:212px;top:214.25px;height:29px;line-height:29px;font-size:22px;color:#e6e6e6;font-weight:bold;transform:scaleX(0.9545);transform-origin:left center;">*Untitled-1</div>
<div class="t" style="right:1897px;top:214.25px;height:29px;line-height:29px;font-size:22px;color:#ececec;font-weight:bold;transform:scaleX(0.9370);transform-origin:right center;">@ 42% [GPU Preview]</div>
<div style="left:150px;top:258px;width:1993px;height:2px;background:#3a3a3a;"></div>
<div style="left:150px;top:260px;width:1993px;height:1324px;background:#5e5e5e;"></div>
<div style="left:2112px;top:260px;width:31px;height:1324px;background:#4b4b4b;"></div>
<div style="left:2112px;top:260px;width:1px;height:1324px;background:#424242;"></div>
<div style="left:2114px;top:356px;width:28px;height:1117px;background:#6e6e6e;border-radius:14px;"></div>
<div style="left:681.7px;top:360px;width:905.8620000000001px;height:1172.192px;background:#ffffff;box-shadow:4px 4px 0 0 #000;"></div>
<div style="left:734.9860000000001px;top:413.3px;width:800.2900000000001px;height:1065.6px;border:1.4px solid #ee3fee;border-right-color:#b94cf0;border-left-color:#b94cf0;box-sizing:border-box;"></div>
<div style="left:150px;top:260px;width:1962px;height:31px;background:#1f1f1f;"></div>
<div style="left:150px;top:291px;width:1962px;height:1.5px;background:#6a6a6a;"></div>
<div style="left:150px;top:260px;width:31.5px;height:1324px;background:#1f1f1f;"></div>
<div style="left:181.5px;top:291px;width:1.2px;height:1293px;background:#6a6a6a;"></div>
<svg style="left:150px;top:260px;" width="32" height="32" viewBox="0 0 32 32"><rect x="0" y="0" width="32" height="32" fill="#1f1f1f"/><path d="M9 0 V32 M0 9 H32" stroke="#bdbdbd" stroke-width="1.2" stroke-dasharray="1.4 2" fill="none"/><path d="M31.3 0 V32 M0 31.3 H32" stroke="#8a8a8a" stroke-width="1.2"/></svg>
<svg style="left:150px;top:260px;" width="1962" height="31" viewBox="0 0 1962 31"><path d="M34.4 27 V31 M52.1 23 V31 M69.9 27 V31 M87.7 27 V31 M105.4 0 V31 M123.2 27 V31 M140.9 27 V31 M158.7 23 V31 M176.5 27 V31 M194.2 27 V31 M212.0 0 V31 M229.7 27 V31 M247.5 27 V31 M265.3 23 V31 M283.0 27 V31 M300.8 27 V31 M318.6 0 V31 M336.3 27 V31 M354.1 27 V31 M371.8 23 V31 M389.6 27 V31 M407.4 27 V31 M425.1 0 V31 M442.9 27 V31 M460.7 27 V31 M478.4 23 V31 M496.2 27 V31 M513.9 27 V31 M531.7 0 V31 M549.5 27 V31 M567.2 27 V31 M585.0 23 V31 M602.7 27 V31 M620.5 27 V31 M638.3 0 V31 M656.0 27 V31 M673.8 27 V31 M691.6 23 V31 M709.3 27 V31 M727.1 27 V31 M744.8 0 V31 M762.6 27 V31 M780.4 27 V31 M798.1 23 V31 M815.9 27 V31 M833.7 27 V31 M851.4 0 V31 M869.2 27 V31 M886.9 27 V31 M904.7 23 V31 M922.5 27 V31 M940.2 27 V31 M958.0 0 V31 M975.8 27 V31 M993.5 27 V31 M1011.3 23 V31 M1029.0 27 V31 M1046.8 27 V31 M1064.6 0 V31 M1082.3 27 V31 M1100.1 27 V31 M1117.8 23 V31 M1135.6 27 V31 M1153.4 27 V31 M1171.1 0 V31 M1188.9 27 V31 M1206.7 27 V31 M1224.4 23 V31 M1242.2 27 V31 M1259.9 27 V31 M1277.7 0 V31 M1295.5 27 V31 M1313.2 27 V31 M1331.0 23 V31 M1348.8 27 V31 M1366.5 27 V31 M1384.3 0 V31 M1402.0 27 V31 M1419.8 27 V31 M1437.6 23 V31 M1455.3 27 V31 M1473.1 27 V31 M1490.8 0 V31 M1508.6 27 V31 M1526.4 27 V31 M1544.1 23 V31 M1561.9 27 V31 M1579.7 27 V31 M1597.4 0 V31 M1615.2 27 V31 M1632.9 27 V31 M1650.7 23 V31 M1668.5 27 V31 M1686.2 27 V31 M1704.0 0 V31 M1721.8 27 V31 M1739.5 27 V31 M1757.3 23 V31 M1775.0 27 V31 M1792.8 27 V31 M1810.6 0 V31 M1828.3 27 V31 M1846.1 27 V31 M1863.9 23 V31 M1881.6 27 V31 M1899.4 27 V31 M1917.1 0 V31 M1934.9 27 V31 M1952.7 27 V31 " stroke="#909090" stroke-width="1.1" fill="none"/></svg>
<div class="t" style="left:259.71200000000005px;top:259.73px;height:26px;line-height:26px;font-size:20px;color:#ffffff;transform:scaleX(1.0788);transform-origin:left center;-webkit-text-stroke:.6px #fff;">24</div>
<div class="t" style="left:366.28400000000005px;top:259.73px;height:26px;line-height:26px;font-size:20px;color:#ffffff;transform:scaleX(1.0788);transform-origin:left center;-webkit-text-stroke:.6px #fff;">18</div>
<div class="t" style="left:472.85600000000005px;top:259.73px;height:26px;line-height:26px;font-size:20px;color:#ffffff;transform:scaleX(1.0788);transform-origin:left center;-webkit-text-stroke:.6px #fff;">12</div>
<div class="t" style="left:579.428px;top:259.73px;height:26px;line-height:26px;font-size:20px;color:#ffffff;transform:scaleX(1.0788);transform-origin:left center;-webkit-text-stroke:.6px #fff;">6</div>
<div class="t" style="left:686.0px;top:259.73px;height:26px;line-height:26px;font-size:20px;color:#ffffff;transform:scaleX(1.0788);transform-origin:left center;-webkit-text-stroke:.6px #fff;">0</div>
<div class="t" style="left:792.572px;top:259.73px;height:26px;line-height:26px;font-size:20px;color:#ffffff;transform:scaleX(1.0788);transform-origin:left center;-webkit-text-stroke:.6px #fff;">6</div>
<div class="t" style="left:899.144px;top:259.73px;height:26px;line-height:26px;font-size:20px;color:#ffffff;transform:scaleX(1.0788);transform-origin:left center;-webkit-text-stroke:.6px #fff;">12</div>
<div class="t" style="left:1005.716px;top:259.73px;height:26px;line-height:26px;font-size:20px;color:#ffffff;transform:scaleX(1.0788);transform-origin:left center;-webkit-text-stroke:.6px #fff;">18</div>
<div class="t" style="left:1112.288px;top:259.73px;height:26px;line-height:26px;font-size:20px;color:#ffffff;transform:scaleX(1.0788);transform-origin:left center;-webkit-text-stroke:.6px #fff;">24</div>
<div class="t" style="left:1218.86px;top:259.73px;height:26px;line-height:26px;font-size:20px;color:#ffffff;transform:scaleX(1.0788);transform-origin:left center;-webkit-text-stroke:.6px #fff;">30</div>
<div class="t" style="left:1325.432px;top:259.73px;height:26px;line-height:26px;font-size:20px;color:#ffffff;transform:scaleX(1.0788);transform-origin:left center;-webkit-text-stroke:.6px #fff;">36</div>
<div class="t" style="left:1432.0040000000001px;top:259.73px;height:26px;line-height:26px;font-size:20px;color:#ffffff;transform:scaleX(1.0788);transform-origin:left center;-webkit-text-stroke:.6px #fff;">42</div>
<div class="t" style="left:1538.576px;top:259.73px;height:26px;line-height:26px;font-size:20px;color:#ffffff;transform:scaleX(1.0788);transform-origin:left center;-webkit-text-stroke:.6px #fff;">48</div>
<div class="t" style="left:1645.148px;top:259.73px;height:26px;line-height:26px;font-size:20px;color:#ffffff;transform:scaleX(1.0788);transform-origin:left center;-webkit-text-stroke:.6px #fff;">54</div>
<div class="t" style="left:1751.72px;top:259.73px;height:26px;line-height:26px;font-size:20px;color:#ffffff;transform:scaleX(1.0788);transform-origin:left center;-webkit-text-stroke:.6px #fff;">60</div>
<div class="t" style="left:1858.292px;top:259.73px;height:26px;line-height:26px;font-size:20px;color:#ffffff;transform:scaleX(1.0788);transform-origin:left center;-webkit-text-stroke:.6px #fff;">66</div>
<div class="t" style="left:1964.864px;top:259.73px;height:26px;line-height:26px;font-size:20px;color:#ffffff;transform:scaleX(1.0788);transform-origin:left center;-webkit-text-stroke:.6px #fff;">72</div>
<div class="t" style="left:2071.4360000000006px;top:259.73px;height:26px;line-height:26px;font-size:20px;color:#ffffff;transform:scaleX(1.0788);transform-origin:left center;-webkit-text-stroke:.6px #fff;">78</div>
<svg style="left:150px;top:260px;" width="32" height="1324" viewBox="0 0 32 1324"><path d="M23 46.6 H31 M27 64.4 H31 M27 82.1 H31 M0 99.9 H31 M27 117.7 H31 M27 135.4 H31 M23 153.2 H31 M27 170.9 H31 M27 188.7 H31 M0 206.5 H31 M27 224.2 H31 M27 242.0 H31 M23 259.8 H31 M27 277.5 H31 M27 295.3 H31 M0 313.0 H31 M27 330.8 H31 M27 348.6 H31 M23 366.3 H31 M27 384.1 H31 M27 401.9 H31 M0 419.6 H31 M27 437.4 H31 M27 455.1 H31 M23 472.9 H31 M27 490.7 H31 M27 508.4 H31 M0 526.2 H31 M27 544.0 H31 M27 561.7 H31 M23 579.5 H31 M27 597.2 H31 M27 615.0 H31 M0 632.8 H31 M27 650.5 H31 M27 668.3 H31 M23 686.0 H31 M27 703.8 H31 M27 721.6 H31 M0 739.3 H31 M27 757.1 H31 M27 774.9 H31 M23 792.6 H31 M27 810.4 H31 M27 828.1 H31 M0 845.9 H31 M27 863.7 H31 M27 881.4 H31 M23 899.2 H31 M27 917.0 H31 M27 934.7 H31 M0 952.5 H31 M27 970.2 H31 M27 988.0 H31 M23 1005.8 H31 M27 1023.5 H31 M27 1041.3 H31 M0 1059.0 H31 M27 1076.8 H31 M27 1094.6 H31 M23 1112.3 H31 M27 1130.1 H31 M27 1147.9 H31 M0 1165.6 H31 M27 1183.4 H31 M27 1201.1 H31 M23 1218.9 H31 M27 1236.7 H31 M27 1254.4 H31 M0 1272.2 H31 M27 1290.0 H31 M27 1307.7 H31 " stroke="#909090" stroke-width="1.1" fill="none"/></svg>
<div class="t" style="left:154.6px;top:360.83px;height:26px;line-height:26px;font-size:20px;color:#ffffff;transform:scaleX(1.0428);transform-origin:left center;-webkit-text-stroke:.6px #fff;">0</div>
<div class="t" style="left:154.6px;top:467.40px;height:26px;line-height:26px;font-size:20px;color:#ffffff;transform:scaleX(1.0428);transform-origin:left center;-webkit-text-stroke:.6px #fff;">6</div>
<div class="t" style="left:154.6px;top:573.97px;height:26px;line-height:26px;font-size:20px;color:#ffffff;transform:scaleX(1.0428);transform-origin:left center;-webkit-text-stroke:.6px #fff;">1</div>
<div class="t" style="left:154.6px;top:591.77px;height:26px;line-height:26px;font-size:20px;color:#ffffff;transform:scaleX(1.0428);transform-origin:left center;-webkit-text-stroke:.6px #fff;">2</div>
<div class="t" style="left:154.6px;top:680.55px;height:26px;line-height:26px;font-size:20px;color:#ffffff;transform:scaleX(1.0428);transform-origin:left center;-webkit-text-stroke:.6px #fff;">1</div>
<div class="t" style="left:154.6px;top:698.35px;height:26px;line-height:26px;font-size:20px;color:#ffffff;transform:scaleX(1.0428);transform-origin:left center;-webkit-text-stroke:.6px #fff;">8</div>
<div class="t" style="left:154.6px;top:787.12px;height:26px;line-height:26px;font-size:20px;color:#ffffff;transform:scaleX(1.0428);transform-origin:left center;-webkit-text-stroke:.6px #fff;">2</div>
<div class="t" style="left:154.6px;top:804.92px;height:26px;line-height:26px;font-size:20px;color:#ffffff;transform:scaleX(1.0428);transform-origin:left center;-webkit-text-stroke:.6px #fff;">4</div>
<div class="t" style="left:154.6px;top:893.69px;height:26px;line-height:26px;font-size:20px;color:#ffffff;transform:scaleX(1.0428);transform-origin:left center;-webkit-text-stroke:.6px #fff;">3</div>
<div class="t" style="left:154.6px;top:911.49px;height:26px;line-height:26px;font-size:20px;color:#ffffff;transform:scaleX(1.0428);transform-origin:left center;-webkit-text-stroke:.6px #fff;">0</div>
<div class="t" style="left:154.6px;top:1000.26px;height:26px;line-height:26px;font-size:20px;color:#ffffff;transform:scaleX(1.0428);transform-origin:left center;-webkit-text-stroke:.6px #fff;">3</div>
<div class="t" style="left:154.6px;top:1018.06px;height:26px;line-height:26px;font-size:20px;color:#ffffff;transform:scaleX(1.0428);transform-origin:left center;-webkit-text-stroke:.6px #fff;">6</div>
<div class="t" style="left:154.6px;top:1106.83px;height:26px;line-height:26px;font-size:20px;color:#ffffff;transform:scaleX(1.0428);transform-origin:left center;-webkit-text-stroke:.6px #fff;">4</div>
<div class="t" style="left:154.6px;top:1124.63px;height:26px;line-height:26px;font-size:20px;color:#ffffff;transform:scaleX(1.0428);transform-origin:left center;-webkit-text-stroke:.6px #fff;">2</div>
<div class="t" style="left:154.6px;top:1213.41px;height:26px;line-height:26px;font-size:20px;color:#ffffff;transform:scaleX(1.0428);transform-origin:left center;-webkit-text-stroke:.6px #fff;">4</div>
<div class="t" style="left:154.6px;top:1231.21px;height:26px;line-height:26px;font-size:20px;color:#ffffff;transform:scaleX(1.0428);transform-origin:left center;-webkit-text-stroke:.6px #fff;">8</div>
<div class="t" style="left:154.6px;top:1319.98px;height:26px;line-height:26px;font-size:20px;color:#ffffff;transform:scaleX(1.0428);transform-origin:left center;-webkit-text-stroke:.6px #fff;">5</div>
<div class="t" style="left:154.6px;top:1337.78px;height:26px;line-height:26px;font-size:20px;color:#ffffff;transform:scaleX(1.0428);transform-origin:left center;-webkit-text-stroke:.6px #fff;">4</div>
<div class="t" style="left:154.6px;top:1426.55px;height:26px;line-height:26px;font-size:20px;color:#ffffff;transform:scaleX(1.0428);transform-origin:left center;-webkit-text-stroke:.6px #fff;">6</div>
<div class="t" style="left:154.6px;top:1444.35px;height:26px;line-height:26px;font-size:20px;color:#ffffff;transform:scaleX(1.0428);transform-origin:left center;-webkit-text-stroke:.6px #fff;">0</div>
<div class="t" style="left:154.6px;top:1533.12px;height:26px;line-height:26px;font-size:20px;color:#ffffff;transform:scaleX(1.0428);transform-origin:left center;-webkit-text-stroke:.6px #fff;">6</div>
<div class="t" style="left:154.6px;top:1550.92px;height:26px;line-height:26px;font-size:20px;color:#ffffff;transform:scaleX(1.0428);transform-origin:left center;-webkit-text-stroke:.6px #fff;">6</div>
<div style="left:150px;top:1584px;width:1993px;height:33px;background:#424242;"></div>
<div style="left:150px;top:1584px;width:1028px;height:33px;background:#4b4b4b;"></div>
<div class="t" style="left:178.5px;top:1587.45px;height:28px;line-height:28px;font-size:21.5px;color:#e6e6e6;-webkit-text-stroke:.3px #e6e6e6;">41.79%</div>
<div class="t" style="right:1979.5px;top:1586.55px;height:28px;line-height:28px;font-size:21.5px;color:#e6e6e6;transform:scaleX(1.0406);transform-origin:right center;-webkit-text-stroke:.3px #e6e6e6;">(working)</div>
<svg style="left:946px;top:1593.5px;" width="18" height="12" viewBox="0 0 18 12"><path d="M2 2.5 L9 9.5 L16 2.5" fill="none" stroke="#e4e4e4" stroke-width="2"/></svg>
<div style="left:993px;top:1589px;width:22px;height:22px;background:#1c9c1c;border-radius:50%;"></div>
<div class="t" style="left:1025.5px;top:1586.85px;height:28px;line-height:28px;font-size:21.5px;color:#ececec;transform:scaleX(1.0212);transform-origin:left center;-webkit-text-stroke:.3px #ececec;">No errors</div>
<svg style="left:1151px;top:1594px;" width="18" height="12" viewBox="0 0 18 12"><path d="M2 2.5 L9 9.5 L16 2.5" fill="none" stroke="#9c9c9c" stroke-width="1.8"/></svg>
<div style="left:1500px;top:1586px;width:472px;height:29px;background:#6a6a6a;border-radius:15px;"></div>
<div style="left:2067px;top:1584px;width:76px;height:33px;background:#4d4d4d;"></div>
<svg style="left:2076px;top:1589px;" width="32" height="24" viewBox="0 0 32 24"><rect x="1.5" y="1.5" width="28" height="20" fill="none" stroke="#b4b4b4" stroke-width="2"/><path d="M15.5 1 V22" stroke="#b4b4b4" stroke-width="2"/></svg>
<svg style="left:2120px;top:1593px;" width="20" height="20" viewBox="0 0 20 20"><rect x="0" y="16" width="1.6" height="1.6" fill="#8a8a8a"/><rect x="4" y="12" width="1.6" height="1.6" fill="#8a8a8a"/><rect x="4" y="16" width="1.6" height="1.6" fill="#8a8a8a"/><rect x="8" y="8" width="1.6" height="1.6" fill="#8a8a8a"/><rect x="8" y="12" width="1.6" height="1.6" fill="#8a8a8a"/><rect x="8" y="16" width="1.6" height="1.6" fill="#8a8a8a"/><rect x="12" y="4" width="1.6" height="1.6" fill="#8a8a8a"/><rect x="12" y="8" width="1.6" height="1.6" fill="#8a8a8a"/><rect x="12" y="12" width="1.6" height="1.6" fill="#8a8a8a"/><rect x="12" y="16" width="1.6" height="1.6" fill="#8a8a8a"/><rect x="16" y="0" width="1.6" height="1.6" fill="#8a8a8a"/><rect x="16" y="4" width="1.6" height="1.6" fill="#8a8a8a"/><rect x="16" y="8" width="1.6" height="1.6" fill="#8a8a8a"/><rect x="16" y="12" width="1.6" height="1.6" fill="#8a8a8a"/><rect x="16" y="16" width="1.6" height="1.6" fill="#8a8a8a"/></svg>
<div style="left:2px;top:202px;width:143px;height:22px;background:#454545;"></div>
<div style="left:2px;top:224px;width:143px;height:2px;background:#363636;"></div>
<div style="left:2px;top:226px;width:143px;height:1391px;background:#535353;"></div>
<svg style="left:12px;top:207px;" width="16" height="12" viewBox="0 0 16 12"><path d="M6 1.5 L2 6 L6 10.5 M13 1.5 L9 6 L13 10.5" fill="none" stroke="#c6c6c6" stroke-width="1.5"/></svg>
<svg style="left:54px;top:232px;" width="40" height="8" viewBox="0 0 40 8"><rect x="0" y="0" width="1.8" height="8" fill="#383838"/><rect x="4" y="0" width="1.8" height="8" fill="#383838"/><rect x="8" y="0" width="1.8" height="8" fill="#383838"/><rect x="12" y="0" width="1.8" height="8" fill="#383838"/><rect x="16" y="0" width="1.8" height="8" fill="#383838"/><rect x="20" y="0" width="1.8" height="8" fill="#383838"/><rect x="24" y="0" width="1.8" height="8" fill="#383838"/><rect x="28" y="0" width="1.8" height="8" fill="#383838"/><rect x="32" y="0" width="1.8" height="8" fill="#383838"/><rect x="36" y="0" width="1.8" height="8" fill="#383838"/></svg>
<div style="left:6px;top:399.7px;width:134px;height:1.6px;background:#474747;"></div>
<div style="left:6px;top:549.9000000000001px;width:134px;height:1.6px;background:#474747;"></div>
<div style="left:6px;top:651.2px;width:134px;height:1.6px;background:#474747;"></div>
<div style="left:6px;top:753.7px;width:134px;height:1.6px;background:#474747;"></div>
<div style="left:14px;top:256px;width:56px;height:44px;background:#303030;border-radius:6px;"></div>
<svg style="left:30px;top:260px;" width="28" height="38" viewBox="0 0 28 38"><path d="M2.6 3.5 V34 L11.3 25 H25 Z" fill="none" stroke="#b9b9b9" stroke-width="1.9" stroke-linejoin="miter"/></svg>
<svg style="left:90px;top:260px;" width="28" height="38" viewBox="0 0 28 38"><path d="M1.8 2 V36 L11.5 26 H26.5 Z" fill="#a9a9a9"/></svg>
<svg style="left:29px;top:309px;" width="32" height="34" viewBox="0 0 32 34"><path d="M22.5 23 V11.5 L14 2 H2 V27 H16" fill="none" stroke="#c6c6c6" stroke-width="2"/><path d="M13.5 2.5 V12 H22.5" fill="none" stroke="#c6c6c6" stroke-width="1.8"/><path d="M18.5 17.5 V33 L23 28.5 H30.5 Z" fill="#c6c6c6"/></svg>
<svg style="left:83px;top:311px;" width="38" height="30" viewBox="0 0 38 30"><rect x="1" y="1" width="3.8" height="28" fill="#c6c6c6"/><rect x="33" y="1" width="3.8" height="28" fill="#c6c6c6"/><path d="M11 15 H27" stroke="#c6c6c6" stroke-width="2.6"/><path d="M14 8.6 L6.4 15 L14 21.4 Z M24 8.6 L31.6 15 L24 21.4 Z" fill="#c6c6c6"/></svg>
<svg style="left:28px;top:357px;" width="30" height="34" viewBox="0 0 30 34"><path d="M2 12.5 V30 H26.5 V12.5" fill="none" stroke="#c6c6c6" stroke-width="3.6"/><rect x="6.4" y="17" width="4" height="3.4" fill="#c6c6c6"/><rect x="12.6" y="17" width="4" height="3.4" fill="#c6c6c6"/><rect x="18.2" y="17" width="4" height="3.4" fill="#c6c6c6"/><rect x="6.4" y="22.6" width="4" height="3.4" fill="#c6c6c6"/><rect x="12.6" y="22.6" width="4" height="3.4" fill="#c6c6c6"/><rect x="18.2" y="22.6" width="4" height="3.4" fill="#c6c6c6"/><path d="M5.5 2 L12.5 9" stroke="#c6c6c6" stroke-width="2.6"/><path d="M15.8 3.2 V12.2 H6.8 Z" fill="#c6c6c6"/></svg>
<svg style="left:88px;top:357px;" width="30" height="34" viewBox="0 0 30 34"><path d="M2 12.5 V30 H26.5 V12.5" fill="none" stroke="#c6c6c6" stroke-width="3.6"/><rect x="7" y="17" width="4" height="3.4" fill="#c6c6c6"/><rect x="12.6" y="17" width="4" height="3.4" fill="#c6c6c6"/><rect x="18.2" y="17" width="4" height="3.4" fill="#c6c6c6"/><rect x="7" y="22.6" width="4" height="3.4" fill="#c6c6c6"/><rect x="12.6" y="22.6" width="4" height="3.4" fill="#c6c6c6"/><rect x="18.2" y="22.6" width="4" height="3.4" fill="#c6c6c6"/><path d="M15.5 11.5 L22.5 4.5" stroke="#c6c6c6" stroke-width="2.6"/><path d="M16.8 1.2 H25.8 V10.2 Z" fill="#c6c6c6"/></svg>
<svg style="left:27px;top:413px;" width="30" height="30" viewBox="0 0 30 30"><path d="M1 1 H29 V8 H26 V4.5 H17.2 V25.5 H21.5 V29 H8.5 V25.5 H12.8 V4.5 H4 V8 H1 Z" fill="#c6c6c6"/></svg>
<svg style="left:60px;top:441px;" width="8" height="8" viewBox="0 0 8 8"><path d="M7.4 0 V7.4 H0 Z" fill="#c6c6c6"/></svg>
<svg style="left:86px;top:412px;" width="32" height="32" viewBox="0 0 32 32"><path d="M2.5 29.5 L29.5 2.5" stroke="#c6c6c6" stroke-width="3"/></svg>
<svg style="left:25px;top:459px;" width="34" height="34" viewBox="0 0 34 34"><path d="M22.5 1 L32 10.5 L28 14.5 L18.5 5 Z" fill="#c6c6c6"/><path d="M17 6.5 L26.5 16 C25 22 22 26.5 18 27.5 L1.5 32 L6 16 C7 11.5 11.5 8 17 6.5 Z M3.5 30 L12 21.5" fill="#c6c6c6"/><path d="M3 30.5 L12.5 21" stroke="#535353" stroke-width="1.6"/><circle cx="14" cy="19.5" r="2.6" fill="#535353"/></svg>
<svg style="left:60px;top:488.5px;" width="8" height="8" viewBox="0 0 8 8"><path d="M7.4 0 V7.4 H0 Z" fill="#c6c6c6"/></svg>
<svg style="left:85px;top:459px;" width="34" height="34" viewBox="0 0 34 34"><path d="M25 1 L32.5 8.5 L28.8 12.2 L21.3 4.7 Z" fill="#c6c6c6"/><path d="M19.6 6.4 L27.1 13.9 L11 30 L1 32.5 L3.5 22.5 Z" fill="#c6c6c6"/><path d="M5 24.5 L4 29.5 L9 28.5 Z" fill="#535353"/></svg>
<svg style="left:120px;top:488.5px;" width="8" height="8" viewBox="0 0 8 8"><path d="M7.4 0 V7.4 H0 Z" fill="#c6c6c6"/></svg>
<svg style="left:26px;top:510px;" width="32" height="28" viewBox="0 0 32 28"><rect x="1.1" y="1.1" width="29.8" height="25.8" fill="none" stroke="#c6c6c6" stroke-width="2.2"/><path d="M1 1 L31 27 M31 1 L1 27" stroke="#c6c6c6" stroke-width="1.5"/></svg>
<svg style="left:60px;top:537px;" width="8" height="8" viewBox="0 0 8 8"><path d="M7.4 0 V7.4 H0 Z" fill="#c6c6c6"/></svg>
<svg style="left:86px;top:510px;" width="32" height="28" viewBox="0 0 32 28"><rect x="1.1" y="1.1" width="29.8" height="25.8" fill="#6e6e6e" stroke="#c6c6c6" stroke-width="2.2"/></svg>
<svg style="left:120px;top:537px;" width="8" height="8" viewBox="0 0 8 8"><path d="M7.4 0 V7.4 H0 Z" fill="#c6c6c6"/></svg>
<svg style="left:24px;top:561px;" width="38" height="34" viewBox="0 0 38 34"><circle cx="30" cy="7" r="5" fill="none" stroke="#c6c6c6" stroke-width="2.4"/><circle cx="30" cy="27" r="5" fill="none" stroke="#c6c6c6" stroke-width="2.4"/><path d="M1.5 9.5 C2 7.5 4 7.5 5.5 8.2 L26.5 23 L24 25.5 Z" fill="#c6c6c6"/><path d="M1.5 24.5 C2 26.5 4 26.5 5.5 25.8 L26.5 11 L24 8.5 Z" fill="#c6c6c6"/></svg>
<svg style="left:83px;top:560px;" width="40" height="33" viewBox="0 0 40 33"><path d="M1 1 V27.5 L8.5 20 H20.5 Z" fill="#c6c6c6"/><path d="M13.5 5.5 H37 V29 H13.5 V21" fill="none" stroke="#c6c6c6" stroke-width="2"/><rect x="11.5" y="3.5" width="4" height="4" fill="#c6c6c6"/><rect x="23.3" y="3.5" width="4" height="4" fill="#c6c6c6"/><rect x="35" y="3.5" width="4" height="4" fill="#c6c6c6"/><rect x="35" y="15.2" width="4" height="4" fill="#c6c6c6"/><rect x="35" y="27" width="4" height="4" fill="#c6c6c6"/><rect x="23.3" y="27" width="4" height="4" fill="#c6c6c6"/><rect x="11.5" y="27" width="4" height="4" fill="#c6c6c6"/></svg>
<svg style="left:120px;top:590.5px;" width="8" height="8" viewBox="0 0 8 8"><path d="M7.4 0 V7.4 H0 Z" fill="#c6c6c6"/></svg>
<svg style="left:26px;top:612px;" width="32" height="28" viewBox="0 0 32 28"><defs><linearGradient id="tg1" x1="0" y1="0" x2="1" y2="0"><stop offset="0" stop-color="#1c1c1c"/><stop offset="1" stop-color="#d0d0d0"/></linearGradient></defs><rect x="1" y="1" width="30" height="26" fill="url(#tg1)" stroke="#9c9c9c" stroke-width="2"/></svg>
<svg style="left:86px;top:612px;" width="32" height="28" viewBox="0 0 32 28"><defs><linearGradient id="tg2" x1="0" y1="0" x2="0" y2="1"><stop offset="0" stop-color="#3a3a3a" stop-opacity="0.05"/><stop offset="1" stop-color="#2a2a2a" stop-opacity="0.95"/></linearGradient></defs><rect x="1" y="1" width="30" height="26" fill="#7d7d7d"/><rect x="2.00" y="2.00" width="4.67" height="4.8" fill="#bdbdbd"/><rect x="2.00" y="11.60" width="4.67" height="4.8" fill="#bdbdbd"/><rect x="2.00" y="21.20" width="4.67" height="4.8" fill="#bdbdbd"/><rect x="6.67" y="6.80" width="4.67" height="4.8" fill="#bdbdbd"/><rect x="6.67" y="16.40" width="4.67" height="4.8" fill="#bdbdbd"/><rect x="11.34" y="2.00" width="4.67" height="4.8" fill="#bdbdbd"/><rect x="11.34" y="11.60" width="4.67" height="4.8" fill="#bdbdbd"/><rect x="11.34" y="21.20" width="4.67" height="4.8" fill="#bdbdbd"/><rect x="16.01" y="6.80" width="4.67" height="4.8" fill="#bdbdbd"/><rect x="16.01" y="16.40" width="4.67" height="4.8" fill="#bdbdbd"/><rect x="20.68" y="2.00" width="4.67" height="4.8" fill="#bdbdbd"/><rect x="20.68" y="11.60" width="4.67" height="4.8" fill="#bdbdbd"/><rect x="20.68" y="21.20" width="4.67" height="4.8" fill="#bdbdbd"/><rect x="25.35" y="6.80" width="4.67" height="4.8" fill="#bdbdbd"/><rect x="25.35" y="16.40" width="4.67" height="4.8" fill="#bdbdbd"/><rect x="1" y="1" width="30" height="26" fill="url(#tg2)" stroke="#c6c6c6" stroke-width="2"/></svg>
<svg style="left:28px;top:666px;" width="29" height="29" viewBox="0 0 29 29"><path d="M0 0 H28.3 V18 L18 28.3 H0 Z" fill="#c6c6c6"/><path d="M19.5 28 V19.5 H28 Z" fill="#535353"/><path d="M20.8 26.8 V20.8 H26.8 Z" fill="#c6c6c6"/><path d="M6 7 H22.5 M6 12.5 H22.5 M6 18 H15" stroke="#535353" stroke-width="2"/></svg>
<svg style="left:85px;top:663px;" width="34" height="34" viewBox="0 0 34 34"><g transform="rotate(-45 17 17)"><rect x="-1.5" y="10" width="37" height="14" rx="1.5" fill="#c6c6c6"/><path d="M8 24 V17 M14.5 24 V19 M21 24 V17 M27.5 24 V19" stroke="#535353" stroke-width="2.4"/></g></svg>
<svg style="left:120px;top:692.6px;" width="8" height="8" viewBox="0 0 8 8"><path d="M7.4 0 V7.4 H0 Z" fill="#c6c6c6"/></svg>
<svg style="left:25px;top:711px;" width="34" height="34" viewBox="0 0 34 34"><path d="M10.5 33 C8.5 29 5.5 25 1.2 18.5 C0.2 16.5 2.8 14.8 4.6 16.6 L9.4 21.6 L7.2 7.2 C6.8 4.4 10.4 3.8 11 6.6 L13.4 17 L14.2 3 C14.4 0.2 18.2 0.2 18.3 3 L18.6 17 L22 5.4 C22.8 2.8 26.4 3.8 25.8 6.6 L23.6 18.4 L28.2 10.6 C29.6 8.4 32.6 10 31.6 12.6 C29 19 27.4 24 26.4 27.4 C25.6 30.2 24.4 32.2 23 33.4 C19 34.6 14 34.4 10.5 33 Z" fill="#c6c6c6"/></svg>
<svg style="left:85px;top:711px;" width="34" height="34" viewBox="0 0 34 34"><circle cx="13" cy="13" r="11" fill="none" stroke="#c6c6c6" stroke-width="2.4"/><path d="M21 21 L31.5 31.5" stroke="#c6c6c6" stroke-width="3.6" stroke-linecap="round"/></svg>
<svg style="left:58px;top:802px;" width="67" height="67" viewBox="0 0 67 67"><path d="M0 0 H67 V67 H0 Z M19 19 V48 H48 V19 Z" fill="#000000" fill-rule="evenodd"/></svg>
<svg style="left:18.5px;top:762.5px;" width="72" height="72" viewBox="0 0 72 72"><rect x="0.5" y="0.5" width="71" height="71" fill="#ffffff" stroke="#c8c8c8" stroke-width="1"/><path d="M1.5 70.5 L70.5 1.5" stroke="#ff0000" stroke-width="4"/></svg>
<svg style="left:109px;top:764px;" width="24" height="24" viewBox="0 0 24 24"><path d="M6.5 1 L1 7.5 L6.5 14 V9.8 C11 9.8 14.8 11 14.8 15.5 H10.6 L16.9 22.8 L23.2 15.5 H19 C19 8 13 5.2 6.5 5.2 Z" fill="#c6c6c6"/></svg>
<svg style="left:20px;top:843px;" width="25" height="25" viewBox="0 0 25 25"><rect x="7.5" y="7.5" width="16" height="16" fill="#000" stroke="#c6c6c6" stroke-width="1.6"/><rect x="11.5" y="11.5" width="8" height="8" fill="#000" stroke="#c6c6c6" stroke-width="1.2"/><rect x="1" y="1" width="15" height="15" fill="#fff" stroke="#c6c6c6" stroke-width="1.8"/><path d="M3.5 13.5 L13.5 3.5" stroke="#ff2020" stroke-width="1.3"/><rect x="2.4" y="2.4" width="12.2" height="12.2" fill="none" stroke="#111" stroke-width="1.2"/></svg>
<div style="left:30px;top:888px;width:36px;height:32px;background:#333333;border-radius:5px;"></div>
<svg style="left:40px;top:895.5px;" width="17" height="17" viewBox="0 0 17 17"><rect x="1" y="1" width="14.6" height="14.6" fill="#6e6e6e" stroke="#c6c6c6" stroke-width="2"/></svg>
<div class="t" style="left:85px;top:888.09px;height:32px;line-height:32px;font-size:25px;color:#c2c2c2;font-weight:bold;font-family:'Liberation Serif',serif;">T</div>
<svg style="left:19px;top:939px;" width="25" height="24" viewBox="0 0 25 24"><rect x="1" y="1" width="22.4" height="21.8" fill="#000" stroke="#8a8a8a" stroke-width="1.6"/></svg>
<svg style="left:59px;top:939px;" width="25" height="24" viewBox="0 0 25 24"><defs><linearGradient id="tg3" x1="0" y1="0" x2="1" y2="0"><stop offset="0" stop-color="#ffffff"/><stop offset="1" stop-color="#222222"/></linearGradient></defs><rect x="1" y="1" width="22.4" height="21.8" fill="url(#tg3)" stroke="#8a8a8a" stroke-width="1.6"/></svg>
<div style="left:94px;top:934px;width:36px;height:36px;background:#303030;border-radius:5px;"></div>
<svg style="left:99px;top:939px;" width="25" height="24" viewBox="0 0 25 24"><rect x="1" y="1" width="22.4" height="21.8" fill="#fff" stroke="#9a9a9a" stroke-width="1.6"/><path d="M2.5 21 L22 3" stroke="#ff0000" stroke-width="3.4"/></svg>
<svg style="left:120px;top:960.5px;" width="8" height="8" viewBox="0 0 8 8"><path d="M7.4 0 V7.4 H0 Z" fill="#c6c6c6"/></svg>
<svg style="left:29.5px;top:994.5px;" width="28" height="22" viewBox="0 0 28 22"><rect x="8.6" y="8.4" width="18" height="12.2" fill="#c6c6c6"/><path d="M7.6 0.8 V7.2 H0.6" fill="none" stroke="#c6c6c6" stroke-width="1.4"/><path d="M13.3 0.8 V4.6 M19.2 0.8 V4.6 M25.2 0.8 V4.6 M0.6 12.7 H4.6 M0.6 19.4 H5.8" stroke="#c6c6c6" stroke-width="1.6"/></svg>
<div style="left:14px;top:1042px;width:56px;height:44px;background:#303030;border-radius:6px;"></div>
<svg style="left:31.5px;top:1052.5px;" width="23" height="23" viewBox="0 0 23 23"><rect x="1" y="1" width="21" height="21" fill="#767676" stroke="#c0c0c0" stroke-width="2"/><rect x="6.2" y="8" width="6.6" height="5" fill="#2c2c2c"/><rect x="9.4" y="11.2" width="8" height="6" fill="none" stroke="#c6c6c6" stroke-width="1.4"/><rect x="6.2" y="8" width="6.6" height="5" fill="#2c2c2c" stroke="#c6c6c6" stroke-width="1"/></svg>
<svg style="left:91.5px;top:1052.5px;" width="23" height="23" viewBox="0 0 23 23"><rect x="1" y="1" width="21" height="21" fill="#6e6e6e" stroke="#c0c0c0" stroke-width="2"/><rect x="1" y="1" width="21" height="5.6" fill="#c0c0c0"/></svg>
<svg style="left:120px;top:1077px;" width="8" height="8" viewBox="0 0 8 8"><path d="M7.4 0 V7.4 H0 Z" fill="#c6c6c6"/></svg>
<div style="left:2143px;top:202px;width:735px;height:1415px;background:#424242;"></div>
<div style="left:2143.5px;top:202px;width:3.5px;height:1415px;background:#343434;"></div>
<div style="left:2146px;top:224.5px;width:78px;height:1392.5px;background:#383838;"></div>
<div style="left:2226px;top:224.5px;width:78px;height:1392.5px;background:#383838;"></div>
<div style="left:2306px;top:224.5px;width:240px;height:1392.5px;background:#383838;"></div>
<div style="left:2548px;top:224.5px;width:332px;height:1392.5px;background:#383838;"></div>
<div style="left:2148px;top:226px;width:74px;height:79.7px;background:#535353;"></div>
<div style="left:2148px;top:308px;width:74px;height:79.8px;background:#535353;"></div>
<div style="left:2148px;top:390px;width:74px;height:1227px;background:#535353;"></div>
<div style="left:2228px;top:226px;width:74px;height:191.7px;background:#535353;"></div>
<div style="left:2228px;top:420px;width:74px;height:1197px;background:#535353;"></div>
<div style="left:2308px;top:226px;width:236px;height:191.6px;background:#535353;"></div>
<div style="left:2308px;top:420.4px;width:236px;height:135.3px;background:#535353;"></div>
<div style="left:2308px;top:558.2px;width:236px;height:80.6px;background:#535353;"></div>
<div style="left:2308px;top:641px;width:236px;height:976px;background:#535353;"></div>
<div style="left:2550px;top:226px;width:328px;height:135.7px;background:#535353;"></div>
<div style="left:2550px;top:364px;width:328px;height:1253px;background:#535353;"></div>
<svg style="left:2196.5px;top:207.3px;" width="16" height="12" viewBox="0 0 16 12"><path d="M5.6 1.6 L1.4 6 L5.6 10.4 M12.6 1.6 L8.4 6 L12.6 10.4" fill="none" stroke="#c6c6c6" stroke-width="1.5"/></svg>
<svg style="left:2276.5px;top:207.3px;" width="16" height="12" viewBox="0 0 16 12"><path d="M5.6 1.6 L1.4 6 L5.6 10.4 M12.6 1.6 L8.4 6 L12.6 10.4" fill="none" stroke="#c6c6c6" stroke-width="1.5"/></svg>
<svg style="left:2518.5px;top:207.3px;" width="16" height="12" viewBox="0 0 16 12"><path d="M5.6 1.6 L1.4 6 L5.6 10.4 M12.6 1.6 L8.4 6 L12.6 10.4" fill="none" stroke="#c6c6c6" stroke-width="1.5"/></svg>
<svg style="left:2852.5px;top:207.3px;" width="16" height="12" viewBox="0 0 16 12"><path d="M5.6 1.6 L1.4 6 L5.6 10.4 M12.6 1.6 L8.4 6 L12.6 10.4" fill="none" stroke="#c6c6c6" stroke-width="1.5"/></svg>
<svg style="left:2166px;top:232px;" width="40" height="9" viewBox="0 0 40 9"><rect x="0.00" y="0" width="1.9" height="8.2" fill="#373737"/><rect x="4.02" y="0" width="1.9" height="8.2" fill="#373737"/><rect x="8.04" y="0" width="1.9" height="8.2" fill="#373737"/><rect x="12.06" y="0" width="1.9" height="8.2" fill="#373737"/><rect x="16.08" y="0" width="1.9" height="8.2" fill="#373737"/><rect x="20.10" y="0" width="1.9" height="8.2" fill="#373737"/><rect x="24.12" y="0" width="1.9" height="8.2" fill="#373737"/><rect x="28.14" y="0" width="1.9" height="8.2" fill="#373737"/><rect x="32.16" y="0" width="1.9" height="8.2" fill="#373737"/><rect x="36.18" y="0" width="1.9" height="8.2" fill="#373737"/></svg>
<svg style="left:2166px;top:314px;" width="40" height="9" viewBox="0 0 40 9"><rect x="0.00" y="0" width="1.9" height="8.2" fill="#373737"/><rect x="4.02" y="0" width="1.9" height="8.2" fill="#373737"/><rect x="8.04" y="0" width="1.9" height="8.2" fill="#373737"/><rect x="12.06" y="0" width="1.9" height="8.2" fill="#373737"/><rect x="16.08" y="0" width="1.9" height="8.2" fill="#373737"/><rect x="20.10" y="0" width="1.9" height="8.2" fill="#373737"/><rect x="24.12" y="0" width="1.9" height="8.2" fill="#373737"/><rect x="28.14" y="0" width="1.9" height="8.2" fill="#373737"/><rect x="32.16" y="0" width="1.9" height="8.2" fill="#373737"/><rect x="36.18" y="0" width="1.9" height="8.2" fill="#373737"/></svg>
<svg style="left:2246px;top:232px;" width="40" height="9" viewBox="0 0 40 9"><rect x="0.00" y="0" width="1.9" height="8.2" fill="#373737"/><rect x="4.02" y="0" width="1.9" height="8.2" fill="#373737"/><rect x="8.04" y="0" width="1.9" height="8.2" fill="#373737"/><rect x="12.06" y="0" width="1.9" height="8.2" fill="#373737"/><rect x="16.08" y="0" width="1.9" height="8.2" fill="#373737"/><rect x="20.10" y="0" width="1.9" height="8.2" fill="#373737"/><rect x="24.12" y="0" width="1.9" height="8.2" fill="#373737"/><rect x="28.14" y="0" width="1.9" height="8.2" fill="#373737"/><rect x="32.16" y="0" width="1.9" height="8.2" fill="#373737"/><rect x="36.18" y="0" width="1.9" height="8.2" fill="#373737"/></svg>
<svg style="left:2406px;top:232px;" width="40" height="9" viewBox="0 0 40 9"><rect x="0.00" y="0" width="1.9" height="8.2" fill="#373737"/><rect x="4.02" y="0" width="1.9" height="8.2" fill="#373737"/><rect x="8.04" y="0" width="1.9" height="8.2" fill="#373737"/><rect x="12.06" y="0" width="1.9" height="8.2" fill="#373737"/><rect x="16.08" y="0" width="1.9" height="8.2" fill="#373737"/><rect x="20.10" y="0" width="1.9" height="8.2" fill="#373737"/><rect x="24.12" y="0" width="1.9" height="8.2" fill="#373737"/><rect x="28.14" y="0" width="1.9" height="8.2" fill="#373737"/><rect x="32.16" y="0" width="1.9" height="8.2" fill="#373737"/><rect x="36.18" y="0" width="1.9" height="8.2" fill="#373737"/></svg>
<svg style="left:2406px;top:426px;" width="40" height="9" viewBox="0 0 40 9"><rect x="0.00" y="0" width="1.9" height="8.2" fill="#373737"/><rect x="4.02" y="0" width="1.9" height="8.2" fill="#373737"/><rect x="8.04" y="0" width="1.9" height="8.2" fill="#373737"/><rect x="12.06" y="0" width="1.9" height="8.2" fill="#373737"/><rect x="16.08" y="0" width="1.9" height="8.2" fill="#373737"/><rect x="20.10" y="0" width="1.9" height="8.2" fill="#373737"/><rect x="24.12" y="0" width="1.9" height="8.2" fill="#373737"/><rect x="28.14" y="0" width="1.9" height="8.2" fill="#373737"/><rect x="32.16" y="0" width="1.9" height="8.2" fill="#373737"/><rect x="36.18" y="0" width="1.9" height="8.2" fill="#373737"/></svg>
<svg style="left:2406px;top:564px;" width="40" height="9" viewBox="0 0 40 9"><rect x="0.00" y="0" width="1.9" height="8.2" fill="#373737"/><rect x="4.02" y="0" width="1.9" height="8.2" fill="#373737"/><rect x="8.04" y="0" width="1.9" height="8.2" fill="#373737"/><rect x="12.06" y="0" width="1.9" height="8.2" fill="#373737"/><rect x="16.08" y="0" width="1.9" height="8.2" fill="#373737"/><rect x="20.10" y="0" width="1.9" height="8.2" fill="#373737"/><rect x="24.12" y="0" width="1.9" height="8.2" fill="#373737"/><rect x="28.14" y="0" width="1.9" height="8.2" fill="#373737"/><rect x="32.16" y="0" width="1.9" height="8.2" fill="#373737"/><rect x="36.18" y="0" width="1.9" height="8.2" fill="#373737"/></svg>
<svg style="left:2694px;top:232px;" width="40" height="9" viewBox="0 0 40 9"><rect x="0.00" y="0" width="1.9" height="8.2" fill="#373737"/><rect x="4.02" y="0" width="1.9" height="8.2" fill="#373737"/><rect x="8.04" y="0" width="1.9" height="8.2" fill="#373737"/><rect x="12.06" y="0" width="1.9" height="8.2" fill="#373737"/><rect x="16.08" y="0" width="1.9" height="8.2" fill="#373737"/><rect x="20.10" y="0" width="1.9" height="8.2" fill="#373737"/><rect x="24.12" y="0" width="1.9" height="8.2" fill="#373737"/><rect x="28.14" y="0" width="1.9" height="8.2" fill="#373737"/><rect x="32.16" y="0" width="1.9" height="8.2" fill="#373737"/><rect x="36.18" y="0" width="1.9" height="8.2" fill="#373737"/></svg>
<div class="t" style="left:2383px;top:259.76px;height:30px;line-height:30px;font-size:23px;color:#f0f0f0;font-weight:bold;transform:scaleX(0.9503);transform-origin:left center;">Pages</div>
<div class="t" style="left:2383px;top:315.66px;height:30px;line-height:30px;font-size:23px;color:#f0f0f0;font-weight:bold;transform:scaleX(0.9627);transform-origin:left center;">Layers</div>
<div class="t" style="left:2383px;top:371.46px;height:30px;line-height:30px;font-size:23px;color:#f0f0f0;font-weight:bold;transform:scaleX(0.9755);transform-origin:left center;">Links</div>
<div class="t" style="left:2383px;top:453.76px;height:30px;line-height:30px;font-size:23px;color:#f0f0f0;font-weight:bold;transform:scaleX(0.9918);transform-origin:left center;">Stroke</div>
<div class="t" style="left:2383px;top:509.36px;height:30px;line-height:30px;font-size:23px;color:#f0f0f0;font-weight:bold;transform:scaleX(0.9992);transform-origin:left center;">Color</div>
<div class="t" style="left:2383px;top:591.66px;height:30px;line-height:30px;font-size:23px;color:#f0f0f0;font-weight:bold;transform:scaleX(0.9679);transform-origin:left center;">Swatches</div>
<div class="t" style="left:2624.5px;top:259.96px;height:30px;line-height:30px;font-size:23px;color:#f0f0f0;font-weight:bold;transform:scaleX(1.0064);transform-origin:left center;">Properties</div>
<div class="t" style="left:2624.5px;top:315.96px;height:30px;line-height:30px;font-size:23px;color:#f0f0f0;font-weight:bold;transform:scaleX(1.0032);transform-origin:left center;">CC Libraries</div>
<svg style="left:2171px;top:253px;" width="31" height="36" viewBox="0 0 31 36"><rect x="1.5" y="2" width="8.4" height="7.6" fill="none" stroke="#c8c8c8" stroke-width="1.7"/><rect x="1.5" y="14" width="8.4" height="7.6" fill="none" stroke="#c8c8c8" stroke-width="1.7"/><rect x="0.7" y="25.4" width="10" height="9.4" fill="#c8c8c8"/><path d="M19 29.5 C30 24 31.5 12.5 25.5 5 L29 2.6 L16.4 1.8 L19.6 13 L22 8 C25.6 14.5 24.5 23.5 19 29.5 Z" fill="#c8c8c8"/></svg>
<svg style="left:2167px;top:329px;" width="41" height="42" viewBox="0 0 41 42"><path d="M19.7 9.2 H8.6 Q3.2 9.2 3.2 14.6 V33.2 Q3.2 38.6 8.6 38.6 H27.6 Q33 38.6 33 33.2 V20.5" fill="none" stroke="#a2a2a2" stroke-width="4.2"/><polygon points="33.96,1.54 34.71,10.49 42.26,15.36 33.31,16.11 28.44,23.66 27.69,14.71 20.14,9.84 29.09,9.09" fill="#a2a2a2"/><polygon points="19.75,18.69 20.26,23.66 24.41,26.45 19.44,26.96 16.65,31.11 16.14,26.14 11.99,23.35 16.96,22.84" fill="#a2a2a2"/></svg>
<svg style="left:2247px;top:255px;" width="36" height="30" viewBox="0 0 36 30"><path d="M0.5 3 Q0.5 1 2.5 1 H11.5 L15 5 H33 Q35 5 35 7 V27 Q35 29 33 29 H2.5 Q0.5 29 0.5 27 Z" fill="#c8c8c8"/><path d="M1.8 2.6 H11 L13.4 5.2 H1.8 Z" fill="#535353"/><path d="M2 2.3 H11 L13.6 5.3" fill="none" stroke="#c8c8c8" stroke-width="1.3"/><path d="M26.5 7.5 L17.5 18 H22.5 L19.5 26.5 L29 15.5 H24 Z" fill="#151515"/></svg>
<svg style="left:2247px;top:309px;" width="39" height="37" viewBox="0 0 39 37"><rect x="5.2" y="21.200000000000003" width="13.5" height="13.5" fill="#c8c8c8"/><rect x="0.2" y="16.200000000000003" width="12.4" height="12.6" fill="#535353"/><rect x="2.2" y="18.200000000000003" width="8.4" height="8.6" fill="#535353" stroke="#c8c8c8" stroke-width="2.2"/></svg>
<div class="t" style="left:2262.2px;top:300.39px;height:44px;line-height:44px;font-size:33.5px;color:#c8c8c8;transform:scaleX(1.0069);transform-origin:left center;-webkit-text-stroke:.55px #c8c8c8;">A</div>
<svg style="left:2247px;top:365px;" width="36" height="37" viewBox="0 0 36 37"><rect x="5.2" y="21.4" width="13.5" height="13.5" fill="#c8c8c8"/><rect x="0.2" y="16.400000000000002" width="12.4" height="12.6" fill="#535353"/><rect x="2.2" y="18.400000000000002" width="8.4" height="8.6" fill="#535353" stroke="#c8c8c8" stroke-width="2.2"/><path d="M20.5 1.3 H33.4 V27 H31 V3.6 H28.2 V27 H25.8 V14.6 H20.5 A6.65 6.65 0 0 1 20.5 1.3 Z" fill="#c8c8c8"/></svg>
<svg style="left:2327px;top:251px;" width="36" height="40" viewBox="0 0 36 40"><path d="M0.8 32.9 V14.2 L10.2 7.2 H16.8 V32.9 Z M19.4 32.9 V7.2 H26 L35.4 14.2 V32.9 Z" fill="#c8c8c8"/><path d="M0.8 14.4 H10 V7.2 M35.4 14.4 H26.2 V7.2" fill="none" stroke="#535353" stroke-width="1.2"/><path d="M18.1 0.7 V38.8" stroke="#c8c8c8" stroke-width="1.9"/></svg>
<svg style="left:2327px;top:309px;" width="36" height="36" viewBox="0 0 36 36"><path d="M18 1 L34.5 12 L18 23 L1.5 12 Z" fill="#c8c8c8"/><path d="M6.3 19.8 L18 27.6 L29.7 19.8 L34.5 23 L18 34.5 L1.5 23 Z" fill="#c8c8c8"/></svg>
<svg style="left:2325.3px;top:372.8px;" width="40" height="20" viewBox="0 0 40 20"><g fill="none" stroke-width="3.4"><rect x="15.2" y="2.7" width="22.6" height="14.2" rx="7.1" stroke="#c8c8c8"/><path d="M13 2.7 H17.7 A7.1 7.1 0 0 1 24.8 9.8" stroke="#535353" stroke-width="6.2"/><rect x="2.2" y="2.7" width="22.6" height="14.2" rx="7.1" stroke="#c8c8c8"/><path d="M15.2 9.8 A7.1 7.1 0 0 0 22.3 16.9 H27" stroke="#535353" stroke-width="6.2"/><path d="M15.2 8.8 V9.8 A7.1 7.1 0 0 0 22.3 16.9 H28" stroke="#c8c8c8"/></g></svg>
<svg style="left:2327.5px;top:451.5px;" width="35" height="26" viewBox="0 0 35 26"><rect x="0" y="0.4" width="34.4" height="2.2" fill="#c8c8c8"/><rect x="0" y="8.6" width="34.4" height="3.6" fill="#c8c8c8"/><rect x="0" y="18.4" width="34.4" height="6" fill="#c8c8c8"/></svg>
<svg style="left:2325px;top:505px;" width="40" height="30" viewBox="0 0 40 30"><path d="M20 1 C31 0 38.5 6.5 38.5 14.5 C38.5 23.5 29 29 18.5 29 C7.5 29 0.8 24.5 0.8 18.5 C0.8 13.5 6 11 11 12.5 C14 13.3 16.5 12 16 9 C15.4 5 16.5 1.6 20 1 Z" fill="#c8c8c8"/><circle cx="30.5" cy="9.5" r="2.4" fill="#535353"/><circle cx="32.5" cy="16" r="2.5" fill="#535353"/><circle cx="27.5" cy="21.5" r="2.8" fill="#535353"/><circle cx="19" cy="23" r="3" fill="#535353"/><circle cx="9.5" cy="20" r="3.1" fill="#535353"/></svg>
<svg style="left:2327.5px;top:592px;" width="33" height="22" viewBox="0 0 33 22"><rect x="0.8" y="0.8" width="31.2" height="20.4" fill="#c4c4c4" stroke="#c8c8c8" stroke-width="1.6"/><rect x="2.4" y="2.4" width="8.4" height="7.6" fill="#8a8a8a"/><rect x="12.2" y="2.4" width="8.4" height="7.6" fill="#c4c4c4"/><rect x="22" y="2.4" width="8.4" height="7.6" fill="#8a8a8a"/><rect x="2.4" y="12" width="8.4" height="7.6" fill="#8a8a8a"/><rect x="12.2" y="12" width="8.4" height="7.6" fill="#8a8a8a"/><rect x="22" y="12" width="8.4" height="7.6" fill="#8a8a8a"/></svg>
<svg style="left:2570px;top:255px;" width="34" height="32" viewBox="0 0 34 32"><path d="M1 6 H33 M1 16 H33 M1 25.8 H33" stroke="#c8c8c8" stroke-width="1.7"/><circle cx="9.9" cy="6" r="4" fill="#535353" stroke="#c8c8c8" stroke-width="1.7"/><circle cx="24" cy="16" r="4" fill="#535353" stroke="#c8c8c8" stroke-width="1.7"/><circle cx="13.8" cy="25.8" r="4" fill="#535353" stroke="#c8c8c8" stroke-width="1.7"/></svg>
<svg style="left:2571px;top:310px;" width="34" height="33" viewBox="0 0 34 33"><rect x="1.8" y="1.8" width="25.6" height="25.6" rx="1.5" fill="none" stroke="#c8c8c8" stroke-width="1.8"/><rect x="6.4" y="6.4" width="25.6" height="25.2" rx="1.5" fill="#535353" stroke="#c8c8c8" stroke-width="1.8"/><path d="M18.3 6.5 H26 V20.5 L22.2 17.4 L18.3 20.5 Z" fill="#c8c8c8"/></svg>
<div id="menu" style="left:234px;top:10px;width:594px;height:1612px;background:#3b3b39;border-radius:13px;overflow:hidden;box-shadow:0 0 0 1px #1d1d1d, 0 6px 22px rgba(0,0,0,.38);">
<div style="left:452px;top:344px;width:400px;height:1182px;background:#fff;opacity:.325;filter:blur(55px);"></div>
<div style="left:0;top:0;width:594px;height:1614px;border:1px solid #646462;border-radius:13px;"></div>
</div>
<div class="t" style="left:261.7px;top:25.90px;height:34px;line-height:34px;font-size:26px;color:#e1e1e1;letter-spacing:0.80px;-webkit-text-stroke:.22px #e1e1e1;">New</div>
<svg style="left:782px;top:31.0px;" width="18" height="22" viewBox="0 0 18 22"><path d="M5 3.5 L13.5 11 L5 18.5" fill="none" stroke="#dedede" stroke-width="3.1" stroke-linecap="round" stroke-linejoin="round"/></svg>
<div style="left:244px;top:64px;width:574px;height:44px;background:#2060d0;border-radius:10px;"></div>
<div class="t" style="left:261.7px;top:69.90px;height:34px;line-height:34px;font-size:26px;color:#ffffff;letter-spacing:0.49px;-webkit-text-stroke:.22px #ffffff;">Open...</div>
<div class="t" style="left:778px;top:69.90px;height:34px;line-height:34px;font-size:26.5px;color:#ffffff;">O</div>
<div class="t" style="left:750.0px;top:72.75px;height:29px;line-height:29px;font-size:22px;color:#ffffff;font-family:'DejaVu Sans','Liberation Sans',sans-serif;-webkit-text-stroke:.35px #ffffff;">⌘</div>
<div style="left:262px;top:124.0px;width:16px;height:16px;background:#2f8cf0;border-radius:50%;"></div>
<div class="t" style="left:290.2px;top:115.90px;height:34px;line-height:34px;font-size:26px;color:#e1e1e1;letter-spacing:0.14px;-webkit-text-stroke:.22px #e1e1e1;">Open PDF...</div>
<div class="t" style="left:261.7px;top:161.90px;height:34px;line-height:34px;font-size:26px;color:#e1e1e1;letter-spacing:0.48px;-webkit-text-stroke:.22px #e1e1e1;">Browse in Bridge...</div>
<div class="t" style="left:778px;top:161.90px;height:34px;line-height:34px;font-size:26.5px;color:rgba(255,255,255,.34);">O</div>
<div class="t" style="left:750.0px;top:164.75px;height:29px;line-height:29px;font-size:22px;color:rgba(255,255,255,.34);font-family:'DejaVu Sans','Liberation Sans',sans-serif;-webkit-text-stroke:.35px rgba(255,255,255,.34);">⌘</div>
<div class="t" style="left:722.4px;top:165.94px;height:27px;line-height:27px;font-size:21px;color:rgba(255,255,255,.34);font-family:'DejaVu Sans','Liberation Sans',sans-serif;-webkit-text-stroke:.35px rgba(255,255,255,.34);">⌥</div>
<div class="t" style="left:261.7px;top:205.90px;height:34px;line-height:34px;font-size:26px;color:#e1e1e1;letter-spacing:0.47px;-webkit-text-stroke:.22px #e1e1e1;">Open Recent</div>
<svg style="left:782px;top:211.0px;" width="18" height="22" viewBox="0 0 18 22"><path d="M5 3.5 L13.5 11 L5 18.5" fill="none" stroke="#dedede" stroke-width="3.1" stroke-linecap="round" stroke-linejoin="round"/></svg>
<div style="left:262px;top:254px;width:538px;height:2px;background:rgba(255,255,255,.17);"></div>
<div class="t" style="left:261.7px;top:271.90px;height:34px;line-height:34px;font-size:26px;color:#e1e1e1;letter-spacing:0.68px;-webkit-text-stroke:.22px #e1e1e1;">Close</div>
<div class="t" style="left:778px;top:271.90px;height:34px;line-height:34px;font-size:26.5px;color:rgba(255,255,255,.34);">W</div>
<div class="t" style="left:750.0px;top:274.75px;height:29px;line-height:29px;font-size:22px;color:rgba(255,255,255,.34);font-family:'DejaVu Sans','Liberation Sans',sans-serif;-webkit-text-stroke:.35px rgba(255,255,255,.34);">⌘</div>
<div class="t" style="left:261.7px;top:315.90px;height:34px;line-height:34px;font-size:26px;color:#e1e1e1;letter-spacing:-0.05px;-webkit-text-stroke:.22px #e1e1e1;">Save</div>
<div class="t" style="left:778px;top:315.90px;height:34px;line-height:34px;font-size:26.5px;color:rgba(255,255,255,.34);">S</div>
<div class="t" style="left:750.0px;top:318.75px;height:29px;line-height:29px;font-size:22px;color:rgba(255,255,255,.34);font-family:'DejaVu Sans','Liberation Sans',sans-serif;-webkit-text-stroke:.35px rgba(255,255,255,.34);">⌘</div>
<div class="t" style="left:261.7px;top:359.90px;height:34px;line-height:34px;font-size:26px;color:#e1e1e1;letter-spacing:0.23px;-webkit-text-stroke:.22px #e1e1e1;">Save As...</div>
<div class="t" style="left:778px;top:359.90px;height:34px;line-height:34px;font-size:26.5px;color:rgba(255,255,255,.34);">S</div>
<div class="t" style="left:750.0px;top:362.75px;height:29px;line-height:29px;font-size:22px;color:rgba(255,255,255,.34);font-family:'DejaVu Sans','Liberation Sans',sans-serif;-webkit-text-stroke:.35px rgba(255,255,255,.34);">⌘</div>
<div class="t" style="left:723.95px;top:361.58px;height:31px;line-height:31px;font-size:24px;color:rgba(255,255,255,.34);font-family:'DejaVu Sans','Liberation Sans',sans-serif;-webkit-text-stroke:.35px rgba(255,255,255,.34);transform:scaleX(1.55);transform-origin:center;">⇧</div>
<div class="t" style="left:261.7px;top:403.90px;height:34px;line-height:34px;font-size:26px;color:#7b7b79;letter-spacing:0.41px;-webkit-text-stroke:.22px #7b7b79;">Check In...</div>
<div class="t" style="left:261.7px;top:447.90px;height:34px;line-height:34px;font-size:26px;color:#e1e1e1;letter-spacing:0.18px;-webkit-text-stroke:.22px #e1e1e1;">Save a Copy...</div>
<div class="t" style="left:778px;top:447.90px;height:34px;line-height:34px;font-size:26.5px;color:rgba(255,255,255,.34);">S</div>
<div class="t" style="left:750.0px;top:450.75px;height:29px;line-height:29px;font-size:22px;color:rgba(255,255,255,.34);font-family:'DejaVu Sans','Liberation Sans',sans-serif;-webkit-text-stroke:.35px rgba(255,255,255,.34);">⌘</div>
<div class="t" style="left:722.4px;top:451.94px;height:27px;line-height:27px;font-size:21px;color:rgba(255,255,255,.34);font-family:'DejaVu Sans','Liberation Sans',sans-serif;-webkit-text-stroke:.35px rgba(255,255,255,.34);">⌥</div>
<div class="t" style="left:261.7px;top:491.90px;height:34px;line-height:34px;font-size:26px;color:#7b7b79;letter-spacing:0.46px;-webkit-text-stroke:.22px #7b7b79;">Revert</div>
<div style="left:262px;top:540px;width:538px;height:2px;background:rgba(255,255,255,.17);"></div>
<div class="t" style="left:261.7px;top:557.90px;height:34px;line-height:34px;font-size:26px;color:#e1e1e1;letter-spacing:0.59px;-webkit-text-stroke:.22px #e1e1e1;">Search Adobe Stock...</div>
<div class="t" style="left:261.7px;top:601.90px;height:34px;line-height:34px;font-size:26px;color:#e1e1e1;letter-spacing:0.37px;-webkit-text-stroke:.22px #e1e1e1;">Place...</div>
<div class="t" style="left:778px;top:601.90px;height:34px;line-height:34px;font-size:26.5px;color:rgba(255,255,255,.34);">D</div>
<div class="t" style="left:750.0px;top:604.75px;height:29px;line-height:29px;font-size:22px;color:rgba(255,255,255,.34);font-family:'DejaVu Sans','Liberation Sans',sans-serif;-webkit-text-stroke:.35px rgba(255,255,255,.34);">⌘</div>
<div class="t" style="left:261.7px;top:645.90px;height:34px;line-height:34px;font-size:26px;color:#e1e1e1;letter-spacing:0.45px;-webkit-text-stroke:.22px #e1e1e1;">Place from CC Libraries...</div>
<div class="t" style="left:261.7px;top:689.90px;height:34px;line-height:34px;font-size:26px;color:#e1e1e1;letter-spacing:0.71px;-webkit-text-stroke:.22px #e1e1e1;">Text to Image</div>
<div class="t" style="left:261.7px;top:733.90px;height:34px;line-height:34px;font-size:26px;color:#e1e1e1;letter-spacing:0.71px;-webkit-text-stroke:.22px #e1e1e1;">Import XML...</div>
<div class="t" style="left:261.7px;top:777.90px;height:34px;line-height:34px;font-size:26px;color:#e1e1e1;letter-spacing:0.49px;-webkit-text-stroke:.22px #e1e1e1;">Import PDF Comments...</div>
<div style="left:262px;top:826px;width:538px;height:2px;background:rgba(255,255,255,.17);"></div>
<div class="t" style="left:261.7px;top:843.90px;height:34px;line-height:34px;font-size:26px;color:#e1e1e1;letter-spacing:0.28px;-webkit-text-stroke:.22px #e1e1e1;">Adobe PDF Presets</div>
<svg style="left:782px;top:849.0px;" width="18" height="22" viewBox="0 0 18 22"><path d="M5 3.5 L13.5 11 L5 18.5" fill="none" stroke="#dedede" stroke-width="3.1" stroke-linecap="round" stroke-linejoin="round"/></svg>
<div class="t" style="left:261.7px;top:887.90px;height:34px;line-height:34px;font-size:26px;color:#e1e1e1;letter-spacing:0.65px;-webkit-text-stroke:.22px #e1e1e1;">Export...</div>
<div class="t" style="left:778px;top:887.90px;height:34px;line-height:34px;font-size:26.5px;color:rgba(255,255,255,.34);">E</div>
<div class="t" style="left:750.0px;top:890.75px;height:29px;line-height:29px;font-size:22px;color:rgba(255,255,255,.34);font-family:'DejaVu Sans','Liberation Sans',sans-serif;-webkit-text-stroke:.35px rgba(255,255,255,.34);">⌘</div>
<div style="left:262px;top:942.0px;width:16px;height:16px;background:#2f8cf0;border-radius:50%;"></div>
<div class="t" style="left:290.2px;top:933.90px;height:34px;line-height:34px;font-size:26px;color:#e1e1e1;letter-spacing:0.58px;-webkit-text-stroke:.22px #e1e1e1;">Share for Text Editing (beta)...</div>
<div class="t" style="left:261.7px;top:979.90px;height:34px;line-height:34px;font-size:26px;color:#e1e1e1;letter-spacing:0.57px;-webkit-text-stroke:.22px #e1e1e1;">Invite to Edit...</div>
<div class="t" style="left:261.7px;top:1023.90px;height:34px;line-height:34px;font-size:26px;color:#e1e1e1;letter-spacing:0.30px;-webkit-text-stroke:.22px #e1e1e1;">Share for Review...</div>
<div class="t" style="left:261.7px;top:1067.90px;height:34px;line-height:34px;font-size:26px;color:#e1e1e1;letter-spacing:0.58px;-webkit-text-stroke:.22px #e1e1e1;">Export to Adobe Express</div>
<div style="left:262px;top:1116px;width:538px;height:2px;background:rgba(255,255,255,.17);"></div>
<div class="t" style="left:261.7px;top:1133.90px;height:34px;line-height:34px;font-size:26px;color:#e1e1e1;letter-spacing:0.43px;-webkit-text-stroke:.22px #e1e1e1;">Publish Online...</div>
<div class="t" style="left:261.7px;top:1177.90px;height:34px;line-height:34px;font-size:26px;color:#e1e1e1;letter-spacing:0.45px;-webkit-text-stroke:.22px #e1e1e1;">Publish Online Dashboard...</div>
<div style="left:262px;top:1226px;width:538px;height:2px;background:rgba(255,255,255,.17);"></div>
<div class="t" style="left:261.7px;top:1243.90px;height:34px;line-height:34px;font-size:26px;color:#e1e1e1;letter-spacing:0.69px;-webkit-text-stroke:.22px #e1e1e1;">Document Presets</div>
<svg style="left:782px;top:1249.0px;" width="18" height="22" viewBox="0 0 18 22"><path d="M5 3.5 L13.5 11 L5 18.5" fill="none" stroke="#dedede" stroke-width="3.1" stroke-linecap="round" stroke-linejoin="round"/></svg>
<div class="t" style="left:261.7px;top:1287.90px;height:34px;line-height:34px;font-size:26px;color:#e1e1e1;letter-spacing:0.69px;-webkit-text-stroke:.22px #e1e1e1;">Document Setup...</div>
<div class="t" style="left:778px;top:1287.90px;height:34px;line-height:34px;font-size:26.5px;color:rgba(255,255,255,.34);">P</div>
<div class="t" style="left:750.0px;top:1290.75px;height:29px;line-height:29px;font-size:22px;color:rgba(255,255,255,.34);font-family:'DejaVu Sans','Liberation Sans',sans-serif;-webkit-text-stroke:.35px rgba(255,255,255,.34);">⌘</div>
<div class="t" style="left:722.4px;top:1291.94px;height:27px;line-height:27px;font-size:21px;color:rgba(255,255,255,.34);font-family:'DejaVu Sans','Liberation Sans',sans-serif;-webkit-text-stroke:.35px rgba(255,255,255,.34);">⌥</div>
<div class="t" style="left:261.7px;top:1331.90px;height:34px;line-height:34px;font-size:26px;color:#e1e1e1;letter-spacing:0.59px;-webkit-text-stroke:.22px #e1e1e1;">Adjust Layout...</div>
<div class="t" style="left:778px;top:1331.90px;height:34px;line-height:34px;font-size:26.5px;color:rgba(255,255,255,.34);">P</div>
<div class="t" style="left:749.45px;top:1333.58px;height:31px;line-height:31px;font-size:24px;color:rgba(255,255,255,.34);font-family:'DejaVu Sans','Liberation Sans',sans-serif;-webkit-text-stroke:.35px rgba(255,255,255,.34);transform:scaleX(1.55);transform-origin:center;">⇧</div>
<div class="t" style="left:719.4px;top:1335.94px;height:27px;line-height:27px;font-size:21px;color:rgba(255,255,255,.34);font-family:'DejaVu Sans','Liberation Sans',sans-serif;-webkit-text-stroke:.35px rgba(255,255,255,.34);">⌥</div>
<div style="left:262px;top:1380px;width:538px;height:2px;background:rgba(255,255,255,.17);"></div>
<div class="t" style="left:261.7px;top:1397.90px;height:34px;line-height:34px;font-size:26px;color:#e1e1e1;letter-spacing:0.56px;-webkit-text-stroke:.22px #e1e1e1;">User...</div>
<div class="t" style="left:261.7px;top:1441.90px;height:34px;line-height:34px;font-size:26px;color:#e1e1e1;letter-spacing:0.32px;-webkit-text-stroke:.22px #e1e1e1;">File Info...</div>
<div class="t" style="left:778px;top:1441.90px;height:34px;line-height:34px;font-size:26.5px;color:rgba(255,255,255,.34);">I</div>
<div class="t" style="left:750.0px;top:1444.75px;height:29px;line-height:29px;font-size:22px;color:rgba(255,255,255,.34);font-family:'DejaVu Sans','Liberation Sans',sans-serif;-webkit-text-stroke:.35px rgba(255,255,255,.34);">⌘</div>
<div class="t" style="left:723.95px;top:1443.58px;height:31px;line-height:31px;font-size:24px;color:rgba(255,255,255,.34);font-family:'DejaVu Sans','Liberation Sans',sans-serif;-webkit-text-stroke:.35px rgba(255,255,255,.34);transform:scaleX(1.55);transform-origin:center;">⇧</div>
<div class="t" style="left:693.9px;top:1445.94px;height:27px;line-height:27px;font-size:21px;color:rgba(255,255,255,.34);font-family:'DejaVu Sans','Liberation Sans',sans-serif;-webkit-text-stroke:.35px rgba(255,255,255,.34);">⌥</div>
<div class="t" style="left:261.7px;top:1485.90px;height:34px;line-height:34px;font-size:26px;color:#e1e1e1;letter-spacing:0.73px;-webkit-text-stroke:.22px #e1e1e1;">User Settings</div>
<svg style="left:782px;top:1491.0px;" width="18" height="22" viewBox="0 0 18 22"><path d="M5 3.5 L13.5 11 L5 18.5" fill="none" stroke="#dedede" stroke-width="3.1" stroke-linecap="round" stroke-linejoin="round"/></svg>
<div style="left:262px;top:1534px;width:538px;height:2px;background:rgba(255,255,255,.17);"></div>
<div class="t" style="left:261.7px;top:1551.90px;height:34px;line-height:34px;font-size:26px;color:#e1e1e1;letter-spacing:0.35px;-webkit-text-stroke:.22px #e1e1e1;clip-path:inset(0 0 6.2px 0);">Package...</div>
<div class="t" style="left:778px;top:1551.90px;height:34px;line-height:34px;font-size:26.5px;color:rgba(255,255,255,.34);">P</div>
<div class="t" style="left:750.0px;top:1554.75px;height:29px;line-height:29px;font-size:22px;color:rgba(255,255,255,.34);font-family:'DejaVu Sans','Liberation Sans',sans-serif;-webkit-text-stroke:.35px rgba(255,255,255,.34);">⌘</div>
<div class="t" style="left:723.95px;top:1553.58px;height:31px;line-height:31px;font-size:24px;color:rgba(255,255,255,.34);font-family:'DejaVu Sans','Liberation Sans',sans-serif;-webkit-text-stroke:.35px rgba(255,255,255,.34);transform:scaleX(1.55);transform-origin:center;">⇧</div>
<div class="t" style="left:693.9px;top:1555.94px;height:27px;line-height:27px;font-size:21px;color:rgba(255,255,255,.34);font-family:'DejaVu Sans','Liberation Sans',sans-serif;-webkit-text-stroke:.35px rgba(255,255,255,.34);">⌥</div>
<svg style="left:519.3px;top:1595.8px;" width="22" height="14" viewBox="0 0 22 14"><path d="M3 3 L11 10.5 L19 3" fill="none" stroke="#e0e0e0" stroke-width="2.6" stroke-linecap="round" stroke-linejoin="round"/></svg>
</body></html>
